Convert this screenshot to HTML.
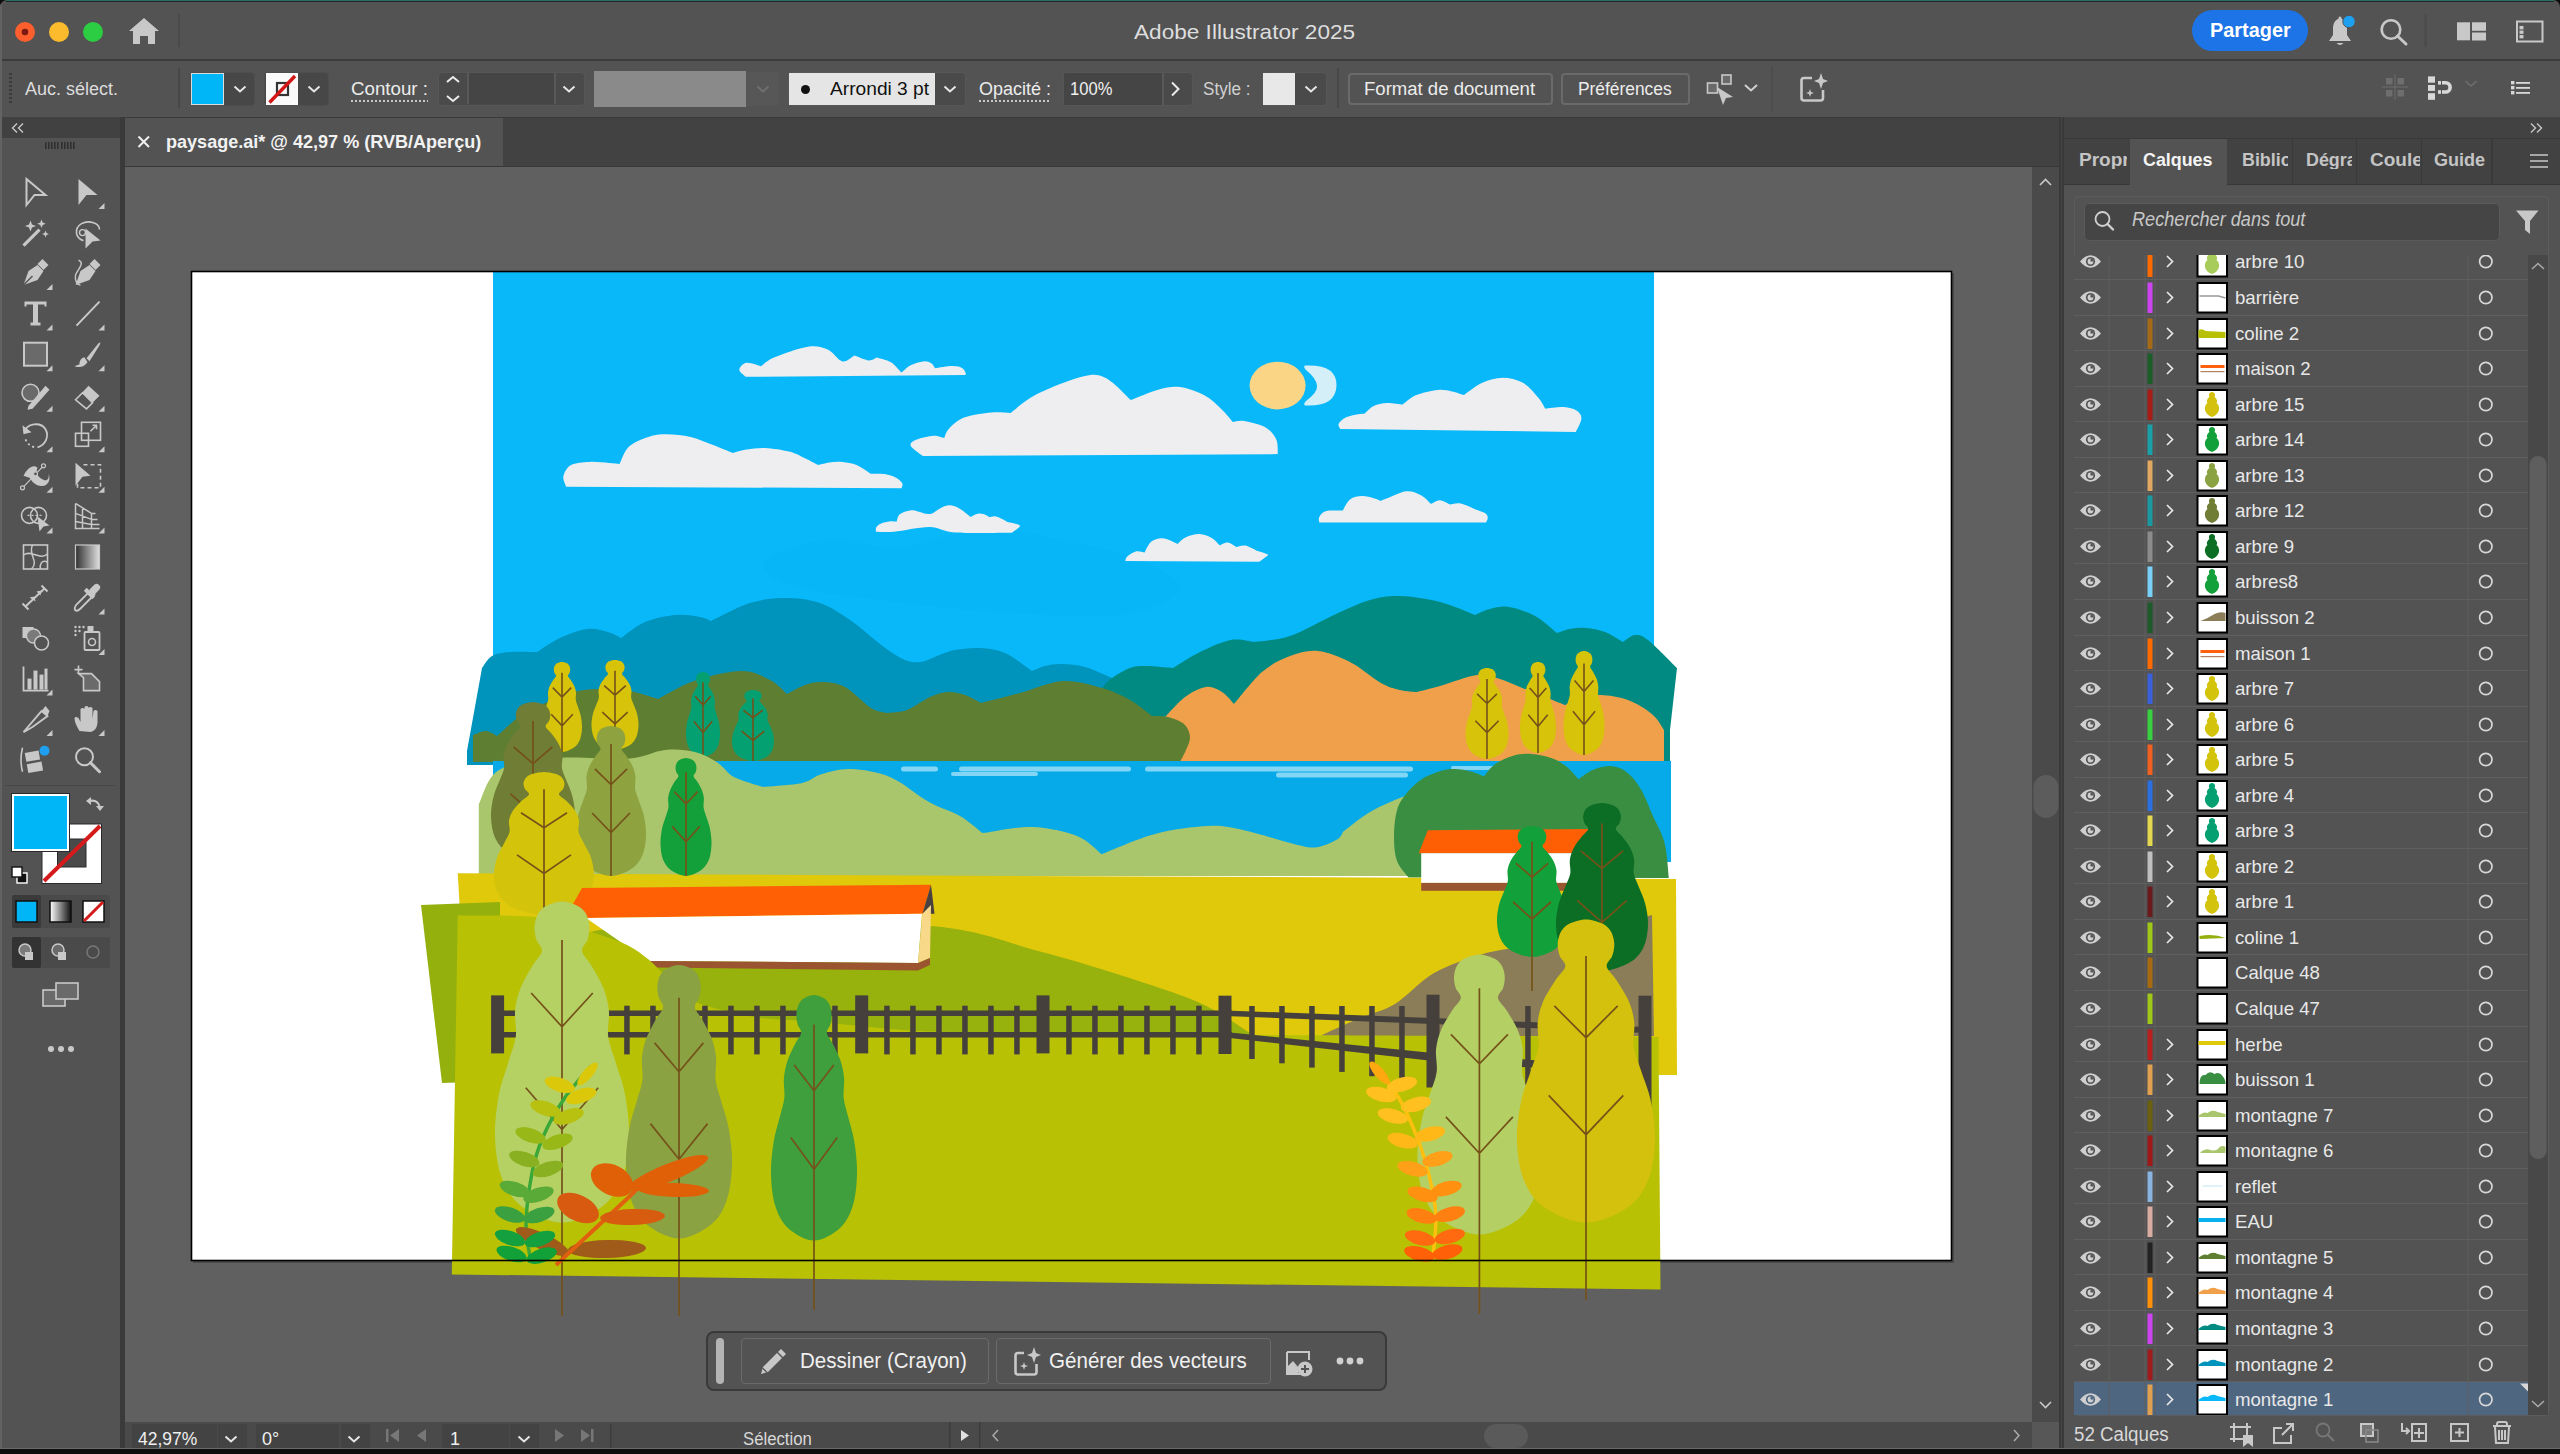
<!DOCTYPE html>
<html><head><meta charset="utf-8">
<style>
*{box-sizing:border-box;margin:0;padding:0}
html,body{width:2560px;height:1454px;overflow:hidden;background:#0c0c0c;font-family:"Liberation Sans",sans-serif;color:#e6e6e6}
.a{position:absolute}
.t{position:absolute;white-space:nowrap;line-height:1}
#win{position:absolute;left:0;top:0;width:2560px;height:1454px;background:#535353;overflow:hidden;border-radius:7px 7px 0 0}
</style></head><body>

<div id="win">

<svg class="a" style="left:0;top:0" width="200" height="60"><circle cx="25" cy="32" r="10" fill="#fe5f2c"/><circle cx="25" cy="32" r="3.3" fill="#7a1a10"/><circle cx="59" cy="32" r="10" fill="#fcbb2d"/><circle cx="93" cy="32" r="10" fill="#2ccc43"/><path d="M144 18 L159 31 L155 31 L155 44 L148 44 L148 36 L140 36 L140 44 L133 44 L133 31 L129 31Z" fill="#c8c8c8"/><rect x="178" y="14" width="2" height="33" fill="#4a4a4a"/></svg><div class="t" style="left:1134px;top:21px;font-size:21px;color:#dedede;font-weight:normal;transform:scaleX(1.076);transform-origin:0 0;">Adobe Illustrator 2025</div><div class="a" style="left:2192px;top:10px;width:116px;height:41px;border-radius:21px;background:#1d74e6"></div><div class="t" style="left:2210px;top:20px;font-size:20.5px;color:#ffffff;font-weight:bold;transform:scaleX(0.97);transform-origin:0 0;">Partager</div><svg class="a" style="left:2320px;top:10px" width="240" height="45"><path d="M20 8.5 C14.5 9.5 13 14 13 19 L13 25 L9 31 L31 31 L27 25 L27 19 C27 14 25.5 9.5 20 8.5Z" fill="#c8c8c8"/><path d="M16.5 33 Q20 37 23.5 33Z" fill="#c8c8c8"/><rect x="18.5" y="6.5" width="3" height="4" rx="1.5" fill="#c8c8c8"/><circle cx="29" cy="11.5" r="6.2" fill="#1ea0f0" stroke="#535353" stroke-width="1"/><circle cx="71" cy="19.5" r="9.3" stroke="#c8c8c8" stroke-width="2.6" fill="none"/><path d="M77.5 26 L86 34" stroke="#c8c8c8" stroke-width="3" stroke-linecap="round"/><rect x="104.5" y="4" width="2" height="33" fill="#4a4a4a"/><rect x="137" y="12.3" width="13" height="18" fill="#c8c8c8"/><rect x="152" y="12.3" width="14" height="8.5" fill="#c8c8c8"/><rect x="152" y="22.5" width="14" height="8" fill="#c8c8c8"/><rect x="197" y="11.5" width="25.5" height="20" fill="none" stroke="#c8c8c8" stroke-width="2"/><rect x="199.5" y="16" width="4" height="3.4" fill="#c8c8c8"/><rect x="199.5" y="20.5" width="4" height="3.4" fill="#c8c8c8"/><rect x="199.5" y="25" width="4" height="3.4" fill="#c8c8c8"/></svg><div class="a" style="left:0px;top:59px;width:2560px;height:2px;background:#3b3b3b;"></div><svg class="a" style="left:8px;top:72px" width="6" height="34"><rect x="1" y="1" width="3" height="2" fill="#3a3a3a"/><rect x="1" y="5" width="3" height="2" fill="#3a3a3a"/><rect x="1" y="9" width="3" height="2" fill="#3a3a3a"/><rect x="1" y="13" width="3" height="2" fill="#3a3a3a"/><rect x="1" y="17" width="3" height="2" fill="#3a3a3a"/><rect x="1" y="21" width="3" height="2" fill="#3a3a3a"/><rect x="1" y="25" width="3" height="2" fill="#3a3a3a"/><rect x="1" y="29" width="3" height="2" fill="#3a3a3a"/></svg><div class="t" style="left:25px;top:80px;font-size:18px;color:#dcdcdc;font-weight:normal;">Auc. sélect.</div><div class="a" style="left:178px;top:68px;width:1.5px;height:40px;background:#474747;"></div><div class="a" style="left:190px;top:71.5px;width:65px;height:34px;border-radius:4px;background:#474747;border:1px solid #4e4e4e"></div><div class="a" style="left:191px;top:73px;width:32.5px;height:32px;background:#00b6f7;border:1.5px solid #dcdcdc"></div><svg class="a" style="left:232.5px;top:84.5px" width="14" height="8" viewBox="0 0 14 8"><path d="M1.5 1.5 L7 6.5 L12.5 1.5" stroke="#e6e6e6" stroke-width="2" fill="none"/></svg><div class="a" style="left:264px;top:71.5px;width:65px;height:34px;border-radius:4px;background:#474747;border:1px solid #4e4e4e"></div><svg class="a" style="left:266px;top:73px" width="32" height="32"><rect width="32" height="32" fill="#fafafa"/><rect x="11" y="10" width="11" height="12" fill="none" stroke="#333" stroke-width="2.2"/><path d="M3.5 29.5 L29 3" stroke="#d21515" stroke-width="3.4"/></svg><svg class="a" style="left:306.5px;top:84.5px" width="14" height="8" viewBox="0 0 14 8"><path d="M1.5 1.5 L7 6.5 L12.5 1.5" stroke="#e6e6e6" stroke-width="2" fill="none"/></svg><div class="t" style="left:350.5px;top:80px;font-size:18px;color:#ececec;font-weight:normal;transform:scaleX(1.04);transform-origin:0 0;">Contour :</div><div class="a" style="left:350.5px;top:100px;width:77px;height:2px;background-image:repeating-linear-gradient(90deg,#c8c8c8 0 2px,transparent 2px 4px)"></div><div class="a" style="left:437.5px;top:71.5px;width:147px;height:34px;border-radius:4px;background:#4a4a4a;border:1px solid #575757"></div><div class="a" style="left:468px;top:73px;width:86px;height:31px;background:#454545;"></div><div class="a" style="left:467px;top:73px;width:1.5px;height:31px;background:#595959;"></div><div class="a" style="left:554px;top:73px;width:1.5px;height:31px;background:#595959;"></div><svg class="a" style="left:445px;top:75px" width="16" height="28"><path d="M2 7 L8 2 L14 7" stroke="#ececec" stroke-width="2" fill="none"/><path d="M2 21 L8 26 L14 21" stroke="#ececec" stroke-width="2" fill="none"/></svg><svg class="a" style="left:561.5px;top:84.5px" width="14" height="8" viewBox="0 0 14 8"><path d="M1.5 1.5 L7 6.5 L12.5 1.5" stroke="#e6e6e6" stroke-width="2" fill="none"/></svg><div class="a" style="left:594px;top:71px;width:151.5px;height:36px;background:#8a8a8a;"></div><div class="a" style="left:746px;top:72px;width:33px;height:34px;border-radius:0 4px 4px 0;background:#575757"></div><svg class="a" style="left:755.5px;top:84.5px" width="14" height="8" viewBox="0 0 14 8"><path d="M1.5 1.5 L7 6.5 L12.5 1.5" stroke="#707070" stroke-width="2" fill="none"/></svg><div class="a" style="left:788px;top:71.5px;width:178px;height:34px;border-radius:4px;background:#4a4a4a;border:1px solid #575757"></div><div class="a" style="left:788.6px;top:72.8px;width:146.4px;height:32.2px;background:#e5e5e5;"></div><div class="a" style="left:801px;top:84.5px;width:9px;height:9px;border-radius:5px;background:#111"></div><div class="t" style="left:829.6px;top:80px;font-size:18px;color:#111;font-weight:normal;transform:scaleX(1.065);transform-origin:0 0;">Arrondi 3 pt</div><svg class="a" style="left:943px;top:84.5px" width="14" height="8" viewBox="0 0 14 8"><path d="M1.5 1.5 L7 6.5 L12.5 1.5" stroke="#e6e6e6" stroke-width="2" fill="none"/></svg><div class="t" style="left:979px;top:80px;font-size:18px;color:#ececec;font-weight:normal;">Opacité :</div><div class="a" style="left:979px;top:100px;width:72px;height:2px;background-image:repeating-linear-gradient(90deg,#c8c8c8 0 2px,transparent 2px 4px)"></div><div class="a" style="left:1062.5px;top:71.5px;width:130px;height:34px;border-radius:4px;background:#4a4a4a;border:1px solid #575757"></div><div class="a" style="left:1063.5px;top:72.5px;width:98.5px;height:32px;background:#454545;"></div><div class="a" style="left:1162px;top:72.5px;width:1.5px;height:32px;background:#595959;"></div><div class="t" style="left:1070px;top:80px;font-size:18px;color:#f0f0f0;font-weight:normal;transform:scaleX(0.92);transform-origin:0 0;">100%</div><svg class="a" style="left:1169px;top:81px" width="14" height="16"><path d="M3 1.5 L9.5 8 L3 14.5" stroke="#ececec" stroke-width="2" fill="none"/></svg><div class="t" style="left:1202.5px;top:80px;font-size:18px;color:#d0d0d0;font-weight:normal;transform:scaleX(0.95);transform-origin:0 0;">Style :</div><div class="a" style="left:1261.5px;top:71.5px;width:65px;height:34px;border-radius:4px;background:#4a4a4a;border:1px solid #575757"></div><div class="a" style="left:1263px;top:73px;width:32px;height:31.6px;background:#e8e8e8;"></div><svg class="a" style="left:1303.5px;top:84.5px" width="14" height="8" viewBox="0 0 14 8"><path d="M1.5 1.5 L7 6.5 L12.5 1.5" stroke="#e6e6e6" stroke-width="2" fill="none"/></svg><div class="a" style="left:1337px;top:68px;width:1.5px;height:40px;background:#474747;"></div><div class="a" style="left:1348px;top:73px;width:204.5px;height:31.6px;border-radius:4px;border:2px solid #6a6a6a"></div><div class="t" style="left:1364.4px;top:80px;font-size:18px;color:#ececec;font-weight:normal;transform:scaleX(1.03);transform-origin:0 0;">Format de document</div><div class="a" style="left:1561px;top:73px;width:128.5px;height:31.6px;border-radius:4px;border:2px solid #6a6a6a"></div><div class="t" style="left:1578px;top:80px;font-size:18px;color:#ececec;font-weight:normal;transform:scaleX(0.965);transform-origin:0 0;">Préférences</div><svg class="a" style="left:1700px;top:70px" width="70" height="36"><rect x="7.5" y="13" width="10" height="10" fill="#6a6a6a" stroke="#c8c8c8" stroke-width="1.6"/><rect x="22" y="5" width="9" height="9" fill="#6a6a6a" stroke="#c8c8c8" stroke-width="1.6"/><path d="M17 17 L33 27 L26 28 L23 35Z" fill="#c8c8c8"/><path d="M45 15 L51 20.5 L57 15" stroke="#d0d0d0" stroke-width="2" fill="none"/></svg><div class="a" style="left:1771px;top:66px;width:1.5px;height:46px;background:#4d4d4d;"></div><svg class="a" style="left:1796px;top:70px" width="36" height="36"><path d="M16 8 L8 8 Q5.5 8 5.5 10.5 L5.5 28 Q5.5 30.5 8 30.5 L24.5 30.5 Q27 30.5 27 28 L27 20" stroke="#c8c8c8" stroke-width="2.6" fill="none"/><path d="M25 3 L27 9 L32 11 L27 13 L25 19 L23 13 L18 11 L23 9Z" fill="#c8c8c8"/><path d="M14 19 L15 22 L18 23 L15 24 L14 27 L13 24 L10 23 L13 22Z" fill="#c8c8c8"/></svg><svg class="a" style="left:2375px;top:70px" width="170" height="36"><g fill="#6e6e6e"><rect x="11" y="8" width="6.5" height="6.5"/><rect x="22.5" y="8" width="6.5" height="6.5"/><rect x="11" y="20" width="6.5" height="6.5"/><rect x="22.5" y="20" width="6.5" height="6.5"/><rect x="7" y="16.5" width="26" height="1"/><rect x="19.5" y="4.5" width="1" height="25"/></g><g fill="#d8d8d8"><rect x="53" y="6.4" width="7" height="6.3"/><rect x="53" y="15" width="7" height="5.9"/><rect x="53" y="23.2" width="7" height="6.6"/></g><path d="M67 12.8 L70.5 12.8 A4.6 4.6 0 0 1 70.5 22 L67 22" stroke="#d8d8d8" stroke-width="3.6" fill="none"/><rect x="63" y="11" width="3" height="3.6" fill="#d8d8d8"/><rect x="63" y="20.2" width="3" height="3.6" fill="#d8d8d8"/><path d="M90.5 11 L96 16 L101.5 11" stroke="#6e6e6e" stroke-width="1.6" fill="none"/><g fill="#d8d8d8"><rect x="136" y="11" width="3.4" height="3.4"/><rect x="136" y="16" width="3.4" height="3.4"/><rect x="136" y="21" width="3.4" height="3.4"/><rect x="141" y="12" width="14" height="1.8"/><rect x="141" y="17" width="14" height="1.8"/><rect x="141" y="22" width="14" height="1.8"/></g></svg><div class="a" style="left:0px;top:4px;width:2px;height:1450px;background:#636363;"></div><div class="a" style="left:2px;top:117px;width:118px;height:21px;background:#414141;"></div><svg class="a" style="left:10px;top:121px" width="16" height="14"><path d="M7 2.5 L2.5 7 L7 11.5 M13 2.5 L8.5 7 L13 11.5" stroke="#c8c8c8" stroke-width="1.4" fill="none"/></svg><svg class="a" style="left:44px;top:142px" width="32" height="8"><rect x="1" y="0" width="1.6" height="7" fill="#303030"/><rect x="4" y="0" width="1.6" height="7" fill="#303030"/><rect x="7" y="0" width="1.6" height="7" fill="#303030"/><rect x="10" y="0" width="1.6" height="7" fill="#303030"/><rect x="13" y="0" width="1.6" height="7" fill="#303030"/><rect x="17" y="0" width="1.6" height="7" fill="#303030"/><rect x="20" y="0" width="1.6" height="7" fill="#303030"/><rect x="23" y="0" width="1.6" height="7" fill="#303030"/><rect x="26" y="0" width="1.6" height="7" fill="#303030"/><rect x="29" y="0" width="1.6" height="7" fill="#303030"/></svg><svg class="a" style="left:0;top:0" width="122" height="1454"><g transform="translate(35.5 192)"><path d="M-9 -13 L10 3 L-1 3 L-9 13Z" fill="none" stroke="#c8c8c8" stroke-width="2"/></g><g transform="translate(87.5 192)"><path d="M-9 -13 L10 3 L-1 3 L-9 13Z" fill="#c8c8c8"/></g><path d="M104.5 209 l0 -6 l-6 6Z" fill="#c8c8c8"/><g transform="translate(35.5 232.6)"><path d="M-12 13 L4 -3" stroke="#c8c8c8" stroke-width="3.2"/><path d="M-5 -12 l1.5 4 4 1.5 -4 1.5 -1.5 4 -1.5 -4 -4 -1.5 4 -1.5Z M6 -13 l1.2 3 3 1.2 -3 1.2 -1.2 3 -1.2 -3 -3 -1.2 3 -1.2Z M10 -2 l1 2.4 2.4 1 -2.4 1 -1 2.4 -1 -2.4 -2.4 -1 2.4 -1Z" fill="#c8c8c8"/></g><g transform="translate(87.5 232.6)"><path d="M-4 8 C-12 6 -14 -4 -6 -9 C2 -13 12 -9 12 -3" stroke="#c8c8c8" stroke-width="1.6" fill="none"/><circle cx="-5" cy="0" r="3" stroke="#c8c8c8" stroke-width="1.4" fill="none"/><path d="M-2 -4 L13 8 L5 9 L-2 16Z" fill="#c8c8c8"/></g><g transform="translate(35.5 273.1)"><path d="M-12 12 L-7 -2 L2 -8 L8 -2 L2 7Z" fill="#c8c8c8"/><path d="M2 -9 L7 -14 L13 -8 L8 -3Z" fill="#c8c8c8"/><path d="M-12 12 L-3 3" stroke="#535353" stroke-width="1.4"/></g><g transform="translate(87.5 273.1)"><path d="M-12 12 L-7 -2 L2 -8 L8 -2 L2 7Z" fill="#c8c8c8"/><path d="M2 -9 L7 -14 L13 -8 L8 -3Z" fill="#c8c8c8"/><path d="M-9 -13 C-2 -10 -10 -4 -12 2 C-13 8 -10 12 -7 12" stroke="#c8c8c8" stroke-width="1.4" fill="none"/></g><path d="M52.5 290.1 l0 -6 l-6 6Z" fill="#c8c8c8"/><g transform="translate(35.5 313.6)"><path d="M-11 -12 L11 -12 L11 -7 L9 -7 L9 -9 L2.5 -9 L2.5 9 L5 9 L5 12 L-5 12 L-5 9 L-2.5 9 L-2.5 -9 L-9 -9 L-9 -7 L-11 -7Z" fill="#c8c8c8"/></g><g transform="translate(87.5 313.6)"><path d="M-11 12 L12 -12" stroke="#c8c8c8" stroke-width="2"/></g><path d="M52.5 330.6 l0 -6 l-6 6Z" fill="#c8c8c8"/><path d="M104.5 330.6 l0 -6 l-6 6Z" fill="#c8c8c8"/><g transform="translate(35.5 354.2)"><rect x="-11.5" y="-11.5" width="23" height="23" fill="#6a6a6a" stroke="#c8c8c8" stroke-width="2"/></g><g transform="translate(87.5 354.2)"><path d="M-1 4 L11 -11 Q14 -13 12 -9 L2 7Z" fill="#c8c8c8"/><path d="M-3 3 Q-8 4 -8 10 L-13 12 Q-5 15 0 8Z" fill="#c8c8c8"/></g><path d="M52.5 371.2 l0 -6 l-6 6Z" fill="#c8c8c8"/><path d="M104.5 371.2 l0 -6 l-6 6Z" fill="#c8c8c8"/><g transform="translate(35.5 394.8)"><circle cx="-5" cy="-2" r="8.5" fill="#6a6a6a" stroke="#c8c8c8" stroke-width="1.6"/><path d="M-7 11 L10 -9 L14 -5 L-3 14 L-8 15Z" fill="#c8c8c8"/></g><g transform="translate(87.5 394.8)"><path d="M-12 5 L1 -9 L12 1 L-1 14Z" fill="#c8c8c8" transform="rotate(0)"/><path d="M-12 5 L-5 -2 L5 8 L-1 14Z" fill="#535353" stroke="#c8c8c8" stroke-width="1.6"/></g><path d="M52.5 411.8 l0 -6 l-6 6Z" fill="#c8c8c8"/><path d="M104.5 411.8 l0 -6 l-6 6Z" fill="#c8c8c8"/><g transform="translate(35.5 435.3)"><path d="M-11 -3 C-9 -12 5 -14 10 -6 C14 1 10 10 2 12" stroke="#c8c8c8" stroke-width="1.8" fill="none"/><path d="M-13 -10 L-12 -1 L-4 -3Z" fill="#c8c8c8"/><path d="M-10 4 Q-7 11 0 12" stroke="#c8c8c8" stroke-width="1.8" stroke-dasharray="2 3" fill="none"/></g><g transform="translate(87.5 435.3)"><rect x="-12" y="-2" width="13" height="13" fill="none" stroke="#c8c8c8" stroke-width="1.6"/><rect x="-6" y="-13" width="19" height="18" fill="none" stroke="#c8c8c8" stroke-width="1.6"/><path d="M3 -4 L9 -10 M5 -10 L9 -10 L9 -6" stroke="#c8c8c8" stroke-width="1.6" fill="none"/></g><path d="M52.5 452.3 l0 -6 l-6 6Z" fill="#c8c8c8"/><path d="M104.5 452.3 l0 -6 l-6 6Z" fill="#c8c8c8"/><g transform="translate(35.5 475.8)"><path d="M-12 0 C-8 -8 -2 -12 2 -8 C0 -4 2 2 8 4 C12 6 14 2 13 -2 C16 4 12 12 4 10 C-2 9 -4 4 -6 2Z" fill="#c8c8c8"/><path d="M-13 12 L8 -10" stroke="#c8c8c8" stroke-width="1.2"/><circle cx="-13" cy="12" r="2" fill="#535353" stroke="#c8c8c8" stroke-width="1.2"/><circle cx="0" cy="-2" r="2" fill="#535353" stroke="#c8c8c8" stroke-width="1.2"/><circle cx="8" cy="-10" r="2" fill="#535353" stroke="#c8c8c8" stroke-width="1.2"/></g><g transform="translate(87.5 475.8)"><path d="M-12 -13 L3 0 L-5 1 L-12 10Z" fill="#c8c8c8"/><path d="M-4 -11 L13 -11 L13 12 L-10 12 L-10 8" stroke="#c8c8c8" stroke-width="1.6" stroke-dasharray="4 3" fill="none"/></g><path d="M52.5 492.8 l0 -6 l-6 6Z" fill="#c8c8c8"/><path d="M104.5 492.8 l0 -6 l-6 6Z" fill="#c8c8c8"/><g transform="translate(35.5 516.4)"><circle cx="-6" cy="-1" r="8" fill="none" stroke="#c8c8c8" stroke-width="1.6"/><circle cx="3" cy="-1" r="8" fill="none" stroke="#c8c8c8" stroke-width="1.6"/><path d="M-8 -1 L6 -1" stroke="#c8c8c8" stroke-width="1.4" stroke-dasharray="2 2"/><path d="M2 0 L14 9 L8 10 L4 15Z" fill="#c8c8c8"/></g><g transform="translate(87.5 516.4)"><path d="M-12 -13 L-12 12 L12 12 M-12 -13 L4 -3 L4 12 M-12 -3 L4 3 M-12 5 L4 8 M-5 -9 L-5 12 M4 -3 L8 -3 M4 3 L10 3 M4 8 L12 8" stroke="#c8c8c8" stroke-width="1.5" fill="none"/></g><path d="M52.5 533.4 l0 -6 l-6 6Z" fill="#c8c8c8"/><path d="M104.5 533.4 l0 -6 l-6 6Z" fill="#c8c8c8"/><g transform="translate(35.5 557)"><rect x="-12" y="-12" width="24" height="24" fill="none" stroke="#c8c8c8" stroke-width="1.6"/><path d="M-12 -2 C-4 -8 4 4 12 -3 M-3 -12 C-8 -2 4 4 -4 12 M12 5 C6 2 4 8 5 12" stroke="#c8c8c8" stroke-width="1.5" fill="none"/></g><g transform="translate(87.5 557)"><defs><linearGradient id="tg" x1="0" x2="1"><stop offset="0" stop-color="#303030"/><stop offset="1" stop-color="#e0e0e0"/></linearGradient></defs><rect x="-12" y="-12" width="24" height="24" fill="url(#tg)" stroke="#c8c8c8" stroke-width="1.2"/></g><g transform="translate(35.5 597.5)"><path d="M-10 9 L9 -9" stroke="#c8c8c8" stroke-width="2"/><path d="M-13 6 L-7 12 M6 -12 L12 -6" stroke="#c8c8c8" stroke-width="2"/><path d="M-6 0 L-1 -1 L0 4Z M1 -6 L6 -7 L5 -2Z" fill="#c8c8c8"/></g><g transform="translate(87.5 597.5)"><path d="M-12 13 Q-14 11 -11 7 L3 -7 L7 -3 L-7 11 Q-10 14 -12 13Z" fill="none" stroke="#c8c8c8" stroke-width="1.8"/><path d="M2 -8 L7 -13 Q10 -15 12 -12 Q14 -10 11 -7 L6 -2Z" fill="#c8c8c8"/><rect x="0" y="-10" width="4" height="12" transform="rotate(-45 2 -4)" fill="#c8c8c8"/></g><path d="M104.5 614.5 l0 -6 l-6 6Z" fill="#c8c8c8"/><g transform="translate(35.5 638)"><rect x="-13" y="-11" width="11" height="11" fill="#c8c8c8"/><circle cx="-2" cy="-2" r="7" fill="#7a7a7a" stroke="#c8c8c8" stroke-width="1.4"/><circle cx="6" cy="5" r="7" fill="#535353" stroke="#c8c8c8" stroke-width="1.6"/></g><g transform="translate(87.5 638)"><rect x="-3" y="-6" width="15" height="18" rx="1" fill="none" stroke="#c8c8c8" stroke-width="1.8"/><circle cx="4.5" cy="4" r="3.5" fill="none" stroke="#c8c8c8" stroke-width="1.6"/><rect x="0" y="-12" width="6" height="5" fill="#c8c8c8"/><g fill="#c8c8c8"><circle cx="-12" cy="-11" r="1.2"/><circle cx="-8" cy="-11" r="1.2"/><circle cx="-4" cy="-11" r="1.2"/><circle cx="-12" cy="-7" r="1.2"/><circle cx="-8" cy="-7" r="1.2"/><circle cx="-12" cy="-3" r="1.2"/></g></g><path d="M104.5 655 l0 -6 l-6 6Z" fill="#c8c8c8"/><g transform="translate(35.5 678.6)"><path d="M-12 -12 L-12 12 L13 12" stroke="#c8c8c8" stroke-width="1.8" fill="none"/><rect x="-8" y="0" width="4" height="11" fill="#c8c8c8"/><rect x="-2" y="-8" width="4" height="19" fill="#c8c8c8"/><rect x="4" y="-4" width="4" height="15" fill="#c8c8c8"/><rect x="9" y="-10" width="3" height="21" fill="#c8c8c8"/></g><g transform="translate(87.5 678.6)"><path d="M-9 -5 L4 -5 L12 3 L12 12 L-4 12 L-4 -1 Z" fill="#6a6a6a" stroke="#c8c8c8" stroke-width="1.6"/><path d="M-13 -9 L-5 -9 M-9 -13 L-9 -5" stroke="#c8c8c8" stroke-width="1.6"/></g><path d="M52.5 695.6 l0 -6 l-6 6Z" fill="#c8c8c8"/><g transform="translate(35.5 719.1)"><path d="M-12 13 L6 -8 L12 -3 L-3 8Z" fill="none" stroke="#c8c8c8" stroke-width="1.8"/><path d="M6 -8 L10 -13 L14 -8 L12 -3Z" fill="#c8c8c8"/></g><g transform="translate(87.5 719.1)"><path d="M-8 12 Q-13 4 -13 -1 Q-12 -3 -9 -1 L-7 3 L-7 -10 Q-5 -12 -3 -10 L-3 -1 L-3 -12 Q-1 -14 1 -12 L1 -1 L1 -11 Q3 -13 5 -11 L5 0 L6 -8 Q8 -10 10 -8 L10 4 Q9 12 3 13Z" fill="#c8c8c8"/></g><path d="M52.5 736.1 l0 -6 l-6 6Z" fill="#c8c8c8"/><path d="M104.5 736.1 l0 -6 l-6 6Z" fill="#c8c8c8"/><g transform="translate(35.5 759.7)"><path d="M-13 -12 Q-16 0 -13 12" stroke="#c8c8c8" stroke-width="1.6" fill="none"/><rect x="-10" y="-8" width="14" height="9" transform="rotate(-10 -3 -3)" fill="#c8c8c8"/><rect x="-8" y="3" width="15" height="9" transform="rotate(-10 0 8)" fill="#c8c8c8"/><circle cx="9" cy="-9" r="5" fill="#1e9ff0"/></g><g transform="translate(87.5 759.7)"><circle cx="-3" cy="-3" r="8.5" fill="none" stroke="#c8c8c8" stroke-width="2"/><path d="M3 3 L12 12" stroke="#c8c8c8" stroke-width="3" stroke-linecap="round"/></g><rect x="5" y="785" width="110" height="1" fill="#484848"/><rect x="42" y="824" width="59.5" height="59.5" fill="#fff" stroke="#2a2a2a" stroke-width="1"/><rect x="57.5" y="839" width="28.5" height="28" fill="#4a4a4a" stroke="#2a2a2a" stroke-width="1"/><path d="M44 881 L100 826" stroke="#d41a1a" stroke-width="4"/><rect x="11.5" y="793.5" width="58" height="58" fill="#fff" stroke="#2a2a2a" stroke-width="1"/><rect x="14" y="796" width="53" height="53" fill="#00b6f7"/><path d="M89 801 Q98 799 100 808" stroke="#c8c8c8" stroke-width="2" fill="none"/><path d="M86 801 L91 797 L91 805Z M96 806 L104 806 L100 811Z" fill="#c8c8c8"/><rect x="17" y="873" width="10" height="10" fill="#111" stroke="#fff" stroke-width="1.4"/><rect x="12" y="867" width="10" height="10" fill="#fff" stroke="#111" stroke-width="1.4"/><rect x="12" y="895" width="98" height="33" rx="2" fill="#4a4a4a"/><rect x="12" y="895" width="29" height="33" rx="2" fill="#3a3a3a"/><rect x="16" y="901" width="21" height="21" fill="#00b6f7" stroke="#111" stroke-width="1.5"/><defs><linearGradient id="g2" x1="0" x2="1"><stop offset="0" stop-color="#fff"/><stop offset="1" stop-color="#111"/></linearGradient></defs><rect x="50" y="901" width="21" height="21" fill="url(#g2)" stroke="#111" stroke-width="1.5"/><rect x="83" y="901" width="21" height="21" fill="#fff" stroke="#111" stroke-width="1.5"/><path d="M84 921 L103 902" stroke="#d41a1a" stroke-width="3"/><rect x="12" y="937" width="98" height="31" rx="2" fill="#4a4a4a"/><rect x="12" y="937" width="29" height="31" rx="2" fill="#333"/><circle cx="25" cy="950" r="6" fill="#7a7a7a" stroke="#c8c8c8" stroke-width="1.5"/><rect x="25" y="952" width="8" height="8" fill="#c8c8c8"/><circle cx="58" cy="950" r="6" fill="#6a6a6a" stroke="#c8c8c8" stroke-width="1.5"/><rect x="58" y="952" width="8" height="8" fill="#c8c8c8"/><circle cx="93" cy="952" r="6" fill="none" stroke="#777" stroke-width="1.5"/><rect x="43" y="990" width="22" height="16" fill="#6a6a6a" stroke="#c8c8c8" stroke-width="1.6"/><rect x="56" y="983" width="22" height="16" fill="#6a6a6a" stroke="#c8c8c8" stroke-width="1.6"/><g fill="#c8c8c8"><circle cx="51" cy="1049" r="3"/><circle cx="61" cy="1049" r="3"/><circle cx="71" cy="1049" r="3"/></g></svg><div class="a" style="left:120px;top:117px;width:5px;height:1332px;background:#3a3a3a;"></div><div class="a" style="left:125px;top:117px;width:1934px;height:50px;background:#424242;"></div><div class="a" style="left:125px;top:117px;width:1934px;height:1px;background:#3a3a3a;"></div><div class="a" style="left:125px;top:166px;width:1934px;height:1px;background:#383838;"></div><div class="a" style="left:125px;top:118px;width:378px;height:48px;background:#535353;"></div><svg class="a" style="left:136px;top:134px" width="16" height="16"><path d="M2.5 2.5 L13 13 M13 2.5 L2.5 13" stroke="#f0f0f0" stroke-width="2"/></svg><div class="t" style="left:166px;top:132px;font-size:19px;color:#f2f2f2;font-weight:bold;transform:scaleX(0.95);transform-origin:0 0;">paysage.ai* @ 42,97 % (RVB/Aperçu)</div><div class="a" style="left:125px;top:167px;width:1907px;height:1255px;background:#606060;"></div><svg class="a" style="left:125px;top:167px" width="1907" height="1255" viewBox="125 167 1907 1255"><rect x="193" y="273" width="1761" height="990" fill="#4a4a4a"/><rect x="191" y="271" width="1761" height="990" fill="#fff"/><rect x="493" y="271" width="1161" height="560" fill="#08b8f9"/><path d="M765 560 C771.7 552.5 807.5 542 830 540 C852.5 538 875 550 900 548 C925 546 953.3 529.3 980 528 C1006.7 526.7 1033.3 534.7 1060 540 C1086.7 545.3 1120 551.7 1140 560 C1160 568.3 1183.3 580.8 1180 590 C1176.7 599.2 1150 611.3 1120 615 C1090 618.7 1040 614.5 1000 612 C960 609.5 915 604.5 880 600 C845 595.5 809.2 591.7 790 585 C770.8 578.3 758.3 567.5 765 560Z" fill="#07b6f7"/><path d="M745.6 376.8 C744.5 375.6 739.1 372 739.3 369.7 C739.5 367.4 742.9 363.4 746.6 362.8 C750.3 362.2 758.8 365.7 761.2 366.2 C763.4 364.8 766.2 360.8 774 357.5 C781.8 354.2 799 348 808 346.7 C817 345.4 822 347.2 827.7 349.6 C833.4 352.1 837.8 360.4 842.3 361.4 C846.8 362.4 852.5 356.5 854.5 355.5 C856.9 356.3 865 360.1 868.7 360.4 C872.4 360.7 875.2 358 876.5 357.5 C878.9 358.3 886.9 359.8 891 362.3 C895.1 364.8 899.7 370.9 901.4 372.6 C903 371.4 907 367.2 910.7 365.3 C914.4 363.4 920 361.7 923.4 361.4 C926.8 361.1 929.3 362.2 931.2 363.3 C933.1 364.4 934.4 367.4 935 368.2 C938 367.8 948.1 366 952.7 366 C957.3 366 960.2 366.9 962.4 368.2 C964.6 369.5 965.4 372.5 965.8 373.6 C966.2 374.7 965.1 374.8 965 375 L745.6 376.8Z" fill="#eeeef0"/><path d="M566.2 486.8 C565.7 485 562.6 479.9 563.4 476.2 C564.2 472.6 566.7 467.4 571 465 C575.3 462.6 583.1 462.2 589.4 461.9 C595.7 461.5 604 462.6 609 462.9 C614 463.2 617.8 463.7 619.6 463.9 C621.1 461 624 451.2 628.8 446.7 C633.5 442.2 642.1 439 648.4 436.9 C654.7 434.8 659.7 434.3 666.7 434.3 C673.7 434.3 683.1 435.2 690.6 436.9 C698.1 438.6 704.7 441.9 711.7 444.6 C718.7 447.3 729.3 451.6 732.8 453 C735.1 452.4 741.5 450.3 746.9 449.5 C752.3 448.7 758.2 447.8 765.2 448.1 C772.2 448.5 782.7 450.1 789 451.6 C795.3 453.1 798.2 455.1 803 457.3 C807.8 459.5 815.4 463.7 817.9 465 C820.1 464.5 827.1 462.7 831.2 462.2 C835.4 461.7 838.3 461.4 842.5 461.9 C846.7 462.4 851.9 463 856.6 465 C861.3 467 868.3 472.2 870.6 473.7 C873 473.8 880.5 473.4 884.7 474.1 C888.9 474.8 893.1 476.2 896 477.7 C898.9 479.2 901.4 481.6 902.3 483.3 C903.2 485.1 901.7 487.4 901.6 488.2 L566.2 486.8Z" fill="#eeeef0"/><path d="M922.9 456.1 C920.9 454.4 911.7 448.4 910.7 445.7 C909.7 442.9 913 441.2 916.8 439.6 C920.6 438 928.9 436.1 933.5 435.8 C938.1 435.6 942.4 437.7 944.2 438.1 C945 436.6 945.5 432.4 948.8 429 C952 425.6 956.9 420.4 964 417.6 C971.1 414.9 983.6 413.3 991.4 412.5 C999.1 411.7 1007.3 412.9 1010.5 413 C1014.9 409.8 1025 400.1 1037 394 C1049 387.9 1071.3 379.1 1082.8 376.4 C1094.2 373.7 1097.7 374.1 1105.7 378 C1113.7 381.9 1126.6 396.3 1130.8 400 C1135.5 398.2 1150.8 391.6 1159 389.4 C1167.2 387.2 1172.7 386 1180.3 387 C1187.9 388 1197.8 391.8 1204.7 395.5 C1211.6 399.2 1216.8 404.8 1221.5 409.2 C1226.2 413.6 1231 420 1232.9 422.1 C1234.8 421.9 1238.8 420.1 1244.3 421 C1249.8 421.9 1260.3 424.4 1265.6 427.5 C1270.9 430.6 1274.3 435.2 1276.3 439.6 C1278.3 444 1277.5 451.7 1277.8 454.1 L922.9 456.1Z" fill="#eeeef0"/><path d="M876 531.7 C876 531 875.4 528.6 876.3 527.2 C877.1 525.8 878.9 524.4 881.1 523.4 C883.3 522.4 886.9 521.7 889.5 521.4 C892.1 521.1 895.4 521.7 896.6 521.7 C897.1 520.5 897.5 516.2 899.8 514.3 C902 512.4 907.1 511 910.1 510.5 C913.1 510 915.2 510.9 917.9 511.4 C920.6 511.9 923.9 513.4 926.2 513.7 C928.6 514 929.9 514.2 932 513.4 C934.1 512.6 936.3 510.2 939.1 508.9 C941.9 507.5 945.6 505.5 948.8 505.3 C952 505.1 954.9 506 958.5 507.9 C962.1 509.8 968.7 515.4 970.7 516.9 C971.9 516.4 975.5 514.1 977.8 513.7 C980 513.3 982.3 513.7 984.2 514.3 C986.1 514.9 988.5 516.7 989.4 517.2 C990.4 517.1 993.2 516 995.2 516.3 C997.2 516.6 999.7 517.9 1001.6 518.8 C1003.5 519.7 1005.9 521.2 1006.8 521.7 C1008.4 522.1 1014.4 523.2 1016.5 524 C1018.6 524.8 1020.5 525.1 1019.7 526.6 C1019 528.1 1013.3 531.7 1012 532.7 C1002.5 532.7 969 533.4 955.2 532.4 C941.5 531.4 939.7 527 929.5 526.9 C919.3 526.8 902.9 530.9 894 531.7 C885.1 532.5 879 531.7 876 531.7Z" fill="#eeeef0"/><path d="M1125.3 561.1 C1125.6 560.4 1125.5 558.2 1127.2 556.6 C1128.9 555 1132.7 552.1 1135.6 551.4 C1138.5 550.7 1143.1 552.2 1144.6 552.4 C1145.7 550.6 1148.3 544.2 1151.1 541.8 C1153.9 539.4 1158.2 538.4 1161.4 538.2 C1164.6 538 1167.7 539.5 1170.4 540.5 C1173.1 541.5 1176.3 543.4 1177.5 544 C1178.9 542.9 1182.2 538.9 1185.9 537.2 C1189.6 535.5 1195.1 533.9 1199.4 534 C1203.7 534.1 1208.3 536 1211.7 537.9 C1215.1 539.8 1218.4 544.1 1219.7 545.3 C1221 544.8 1225 542.1 1227.8 542.4 C1230.5 542.7 1234.8 546.1 1236.2 546.9 C1237.7 546.7 1241.8 545 1245.2 545.6 C1248.6 546.2 1254.9 549.9 1256.8 550.8 C1258.2 551.2 1263.4 552.6 1265.2 553.4 C1267 554.1 1268.7 553.9 1267.8 555.3 C1266.8 556.7 1260.8 560.6 1259.4 561.7 L1125.3 561.1Z" fill="#eeeef0"/><path d="M1340.2 429 C1339.9 428.1 1337.8 425.8 1338.6 423.9 C1339.4 422 1342.4 419.3 1345.2 417.8 C1348 416.3 1352.2 415.5 1355.4 414.8 C1358.6 414.1 1363 413.9 1364.5 413.8 C1366 412.5 1370 407.9 1373.7 406.1 C1377.4 404.3 1382.1 403.4 1386.9 403.1 C1391.7 402.9 1400 404.4 1402.6 404.6 C1404.9 403 1410.4 397.4 1416.3 395 C1422.2 392.6 1431.8 390.5 1437.7 389.9 C1443.6 389.3 1447.5 390.5 1451.9 391.4 C1456.3 392.2 1462 394.4 1464 395 C1467 393 1475.8 385.7 1482.3 382.8 C1488.8 379.9 1495.9 377.7 1502.7 377.7 C1509.5 377.7 1517.1 379.5 1523 382.8 C1528.9 386.1 1534.5 393.2 1538.2 397.5 C1541.9 401.8 1544.1 406.8 1545.3 408.7 C1548.3 408.4 1558.3 406.8 1563.6 407.1 C1568.8 407.4 1573.8 408.8 1576.8 410.7 C1579.8 412.6 1581.6 415.2 1581.4 418.8 C1581.2 422.4 1576.7 429.8 1575.8 432 L1340.2 429Z" fill="#eeeef0"/><path d="M1319.3 522.5 C1319.3 521.6 1318.1 518.8 1319.3 516.9 C1320.5 515 1322.4 512 1326.3 511 C1330.2 509.9 1340 510.7 1342.7 510.6 C1343.9 508.7 1346.8 501.8 1350 499.4 C1353.2 497 1358.2 496.3 1362 496.1 C1365.8 495.9 1370 497.2 1373.1 498 C1376.2 498.8 1379.3 500.4 1380.5 500.9 C1381.8 500.4 1383.7 499.6 1388 498 C1392.3 496.4 1400.9 491.7 1406.5 491.3 C1412.1 490.9 1417.3 493.3 1421.4 495.4 C1425.5 497.5 1429.4 502.5 1431 503.9 C1432.5 503.3 1436.7 500.1 1439.9 500.2 C1443.1 500.3 1448.6 503.9 1450.3 504.6 C1452 504.4 1456.4 502.6 1460.7 503.5 C1465 504.4 1473.7 508.8 1476.3 509.8 C1477.8 510.4 1483.3 511.9 1485.2 513.2 C1487.1 514.5 1487.7 516.1 1487.8 517.6 C1487.9 519.1 1486.3 521.7 1486 522.5 L1319.3 522.5Z" fill="#eeeef0"/><ellipse cx="1277.6" cy="385.6" rx="28" ry="23.8" fill="#fad586"/><path d="M1305 365.5 Q1337 364 1336.5 385.5 Q1336 407 1305 405.5 Q1303 404 1306 401 Q1318 392 1317 385.5 Q1316 378 1306 370 Q1303 367 1305 365.5Z" fill="#d4eff7"/><path d="M467 751 L482 668 C483.7 666 487.3 658.7 492 656 C496.7 653.3 502.5 652.7 510 652 C517.5 651.3 532.5 652 537 652 C540.8 649.7 551.7 641.8 560 638 C568.3 634.2 579 630 587 629 C595 628 602.3 630.5 608 632 C613.7 633.5 618.8 637 621 638 C625 635.3 635.8 625.8 645 622 C654.2 618.2 666.8 615.8 676 615 C685.2 614.2 694.2 616 700 617 C705.8 618 709.2 620.3 711 621 C717.5 618 737.7 606.8 750 603 C762.3 599.2 773.3 598 785 598 C796.7 598 809.2 599.3 820 603 C830.8 606.7 839.3 612.7 850 620 C860.7 627.3 874.8 640.3 884 647 C893.2 653.7 898.8 657.5 905 660 C911.2 662.5 915.7 662.7 921 662 C926.3 661.3 934.3 657 937 656 C940 655 947.8 651.3 955 650 C962.2 648.7 971.7 647.5 980 648 C988.3 648.5 996.3 649.2 1005 653 C1013.7 656.8 1027.5 668 1032 671 C1034.2 670.2 1040 667.2 1045 666 C1050 664.8 1055.3 663.8 1062 664 C1068.7 664.2 1076.7 664.7 1085 667 C1093.3 669.3 1107.5 676.2 1112 678 L1150 700 L1150 765 L467 765Z" fill="#0093bc"/><path d="M1102 688 C1103.7 686.3 1107.3 681.3 1112 678 C1116.7 674.7 1124.3 670 1130 668 C1135.7 666 1138.8 666 1146 666 C1153.2 666 1168.5 667.7 1173 668 C1177.5 665.3 1190.3 656.7 1200 652 C1209.7 647.3 1222 641.7 1231 640 C1240 638.3 1250.2 641.7 1254 642 C1260 641 1276.3 640.7 1290 636 C1303.7 631.3 1322.7 620 1336 614 C1349.3 608 1359.3 603 1370 600 C1380.7 597 1388.3 595.7 1400 596 C1411.7 596.3 1427.5 598.8 1440 602 C1452.5 605.2 1469.2 612.8 1475 615 C1477.5 614 1484.3 610.3 1490 609 C1495.7 607.7 1501.5 605.8 1509 607 C1516.5 608.2 1527 611.7 1535 616 C1543 620.3 1553.3 630.2 1557 633 C1559.2 632.3 1565.2 629.8 1570 629 C1574.8 628.2 1580.2 627.5 1586 628 C1591.8 628.5 1598.8 629.7 1605 632 C1611.2 634.3 1620 640.3 1623 642 C1625 640.8 1630.8 635.3 1635 635 C1639.2 634.7 1641 634.5 1648 640 C1655 645.5 1672.2 663.3 1677 668 L1670 730 L1670 765 L1102 765Z" fill="#018a82"/><path d="M1150 762 L1165 717 C1168.3 713.7 1178.2 702 1185 697 C1191.8 692 1199.8 687.8 1206 687 C1212.2 686.2 1217.3 689.2 1222 692 C1226.7 694.8 1232 702 1234 704 C1238.7 698.7 1252.7 680 1262 672 C1271.3 664 1280.7 659.5 1290 656 C1299.3 652.5 1308 650 1318 651 C1328 652 1339.5 656.7 1350 662 C1360.5 667.3 1372.7 678.3 1381 683 C1389.3 687.7 1394 688.5 1400 690 C1406 691.5 1414.2 691.7 1417 692 C1420.8 691 1430 688.8 1440 686 C1450 683.2 1467 676.2 1477 675 C1487 673.8 1492.8 677 1500 679 C1507.2 681 1512.5 684 1520 687 C1527.5 690 1537.5 694 1545 697 C1552.5 700 1561.7 703.7 1565 705 C1567.5 703.8 1574 699.7 1580 698 C1586 696.3 1593.5 694.8 1601 695 C1608.5 695.2 1618.2 697 1625 699 C1631.8 701 1637 704 1642 707 C1647 710 1651.3 713.2 1655 717 C1658.7 720.8 1662.5 727.8 1664 730 L1664 762Z" fill="#f0a04a"/><path d="M473 762 L473 735 C475.2 734.3 482 730.8 486 731 C490 731.2 495.2 735.2 497 736 C500.8 732.7 512.7 721.2 520 716 C527.3 710.8 532.7 708.8 541 705 C549.3 701.2 560.3 695.7 570 693 C579.7 690.3 589 689.3 599 689 C609 688.7 620.2 689.3 630 691 C639.8 692.7 653.3 697.7 658 699 C664 696 680.2 685.7 694 681 C707.8 676.3 728.3 671.2 741 671 C753.7 670.8 762.3 676.2 770 680 C777.7 683.8 784.2 691.7 787 694 C790 692.5 799.2 687 805 685 C810.8 683 815.3 681.7 822 682 C828.7 682.3 836.8 682.7 845 687 C853.2 691.3 864 703.7 871 708 C878 712.3 884.3 712.2 887 713 C890.3 712.5 899.8 712.7 907 710 C914.2 707.3 923.2 700 930 697 C936.8 694 942.2 692.3 948 692 C953.8 691.7 959.5 693.2 965 695 C970.5 696.8 978.3 701.7 981 703 C987.5 701.3 1006.3 696.7 1020 693 C1033.7 689.3 1049.3 681.8 1063 681 C1076.7 680.2 1090.8 684.8 1102 688 C1113.2 691.2 1121.7 695.3 1130 700 C1138.3 704.7 1148.3 713.3 1152 716 C1154.7 716.2 1162.7 715.7 1168 717 C1173.3 718.3 1180.3 720.7 1184 724 C1187.7 727.3 1189.7 732.7 1190 737 C1190.3 741.3 1187.7 745.8 1186 750 C1184.3 754.2 1181 760 1180 762Z" fill="#5e7f32"/><path d="M562 662 C563.5 662 565.3 662.6 566.4 663.1 C567.5 663.5 568 664.1 568.6 664.7 C569.2 665.3 569.5 666.1 569.8 667 C570.1 667.8 570.2 668.7 570.2 669.6 C570.2 670.6 570 671.8 569.6 672.8 C569.2 673.8 567.8 674.8 568 676 C568.2 677.2 569.7 678.3 570.8 680 C571.9 681.7 573.5 684.2 574.4 686.3 C575.3 688.4 575.8 690.4 576 692.6 C576.2 694.9 575.5 697.4 575.8 699.8 C576.1 702.2 577.2 704.3 578 707 C578.8 709.7 580.1 712.5 580.8 716 C581.5 719.5 582.1 723.8 582 727.7 C581.9 731.6 581.3 736.1 580 739.4 C578.7 742.7 577 745.4 574 747.5 C571 749.6 566 752 562 752 C558 752 553 749.6 550 747.5 C547 745.4 545.3 742.7 544 739.4 C542.7 736.1 542.1 731.6 542 727.7 C541.9 723.8 542.5 719.5 543.2 716 C543.9 712.5 545.2 709.7 546 707 C546.8 704.3 547.9 702.2 548.2 699.8 C548.5 697.4 547.8 694.9 548 692.6 C548.2 690.4 548.7 688.4 549.6 686.3 C550.5 684.2 552.1 681.7 553.2 680 C554.3 678.3 555.8 677.2 556 676 C556.2 674.8 554.8 673.8 554.4 672.8 C554 671.8 553.8 670.6 553.8 669.6 C553.8 668.7 553.9 667.8 554.2 667 C554.5 666.1 554.8 665.3 555.4 664.7 C556 664.1 556.5 663.5 557.6 663.1 C558.7 662.6 560.5 662 562 662Z" fill="#d6c30a"/><path d="M562 672.8 L562 752 M552.8 687.6 L562 697.1 L571.2 687.6 M551.2 714.2 L562 725.9 L572.8 714.2" stroke="#74521a" stroke-width="1.6" fill="none"/><path d="M615 660 C616.7 660 618.9 660.6 620.2 661.1 C621.5 661.5 622.1 662.1 622.8 662.7 C623.4 663.3 623.9 664.1 624.2 665 C624.5 665.8 624.7 666.7 624.6 667.6 C624.6 668.6 624.4 669.8 623.9 670.8 C623.5 671.8 621.8 672.8 622 674 C622.3 675.2 624.1 676.3 625.3 678 C626.6 679.7 628.6 682.2 629.6 684.3 C630.6 686.4 631.2 688.4 631.5 690.6 C631.7 692.9 630.8 695.4 631.2 697.8 C631.6 700.2 632.8 702.3 633.8 705 C634.8 707.7 636.3 710.5 637.1 714 C637.9 717.5 638.7 721.8 638.5 725.7 C638.3 729.6 637.7 734.1 636.1 737.4 C634.6 740.7 632.6 743.4 629.1 745.5 C625.6 747.6 619.7 750 615 750 C610.3 750 604.4 747.6 600.9 745.5 C597.4 743.4 595.4 740.7 593.9 737.4 C592.3 734.1 591.7 729.6 591.5 725.7 C591.3 721.8 592.1 717.5 592.9 714 C593.7 710.5 595.2 707.7 596.2 705 C597.2 702.3 598.4 700.2 598.8 697.8 C599.2 695.4 598.3 692.9 598.5 690.6 C598.8 688.4 599.4 686.4 600.4 684.3 C601.4 682.2 603.4 679.7 604.7 678 C605.9 676.3 607.7 675.2 608 674 C608.2 672.8 606.5 671.8 606.1 670.8 C605.6 669.8 605.4 668.6 605.4 667.6 C605.3 666.7 605.5 665.8 605.8 665 C606.1 664.1 606.6 663.3 607.2 662.7 C607.9 662.1 608.5 661.5 609.8 661.1 C611.1 660.6 613.3 660 615 660Z" fill="#d6c30a"/><path d="M615 670.8 L615 750 M604.2 685.6 L615 695.1 L625.8 685.6 M602.3 712.2 L615 723.9 L627.7 712.2" stroke="#74521a" stroke-width="1.6" fill="none"/><path d="M703 672 C704.2 672 705.8 672.6 706.7 673 C707.7 673.4 708.1 673.9 708.6 674.5 C709.1 675.2 709.4 675.9 709.6 676.7 C709.9 677.5 710 678.3 710 679.2 C709.9 680.1 709.8 681.2 709.5 682.2 C709.1 683.2 707.9 684 708.1 685.2 C708.3 686.3 709.6 687.4 710.5 689 C711.4 690.6 712.8 693 713.5 695 C714.3 696.9 714.7 698.8 714.9 700.9 C715.1 703 714.4 705.4 714.7 707.7 C715 710 715.9 712 716.6 714.5 C717.3 717 718.4 719.7 719 723 C719.5 726.3 720.1 730.4 720 734 C719.9 737.7 719.4 742 718.3 745.1 C717.2 748.2 715.8 750.8 713.2 752.8 C710.7 754.7 706.4 757 703 757 C699.6 757 695.3 754.7 692.8 752.8 C690.2 750.8 688.8 748.2 687.7 745.1 C686.6 742 686.1 737.7 686 734 C685.9 730.4 686.5 726.3 687 723 C687.6 719.7 688.7 717 689.4 714.5 C690.1 712 691 710 691.3 707.7 C691.6 705.4 690.9 703 691.1 700.9 C691.3 698.8 691.7 696.9 692.5 695 C693.2 693 694.6 690.6 695.5 689 C696.4 687.4 697.7 686.3 697.9 685.2 C698.1 684 696.9 683.2 696.5 682.2 C696.2 681.2 696.1 680.1 696 679.2 C696 678.3 696.1 677.5 696.4 676.7 C696.6 675.9 696.9 675.2 697.4 674.5 C697.9 673.9 698.3 673.4 699.3 673 C700.2 672.6 701.8 672 703 672Z" fill="#05a072"/><path d="M703 682.2 L703 757 M695.2 696.2 L703 705.1 L710.8 696.2 M693.8 721.3 L703 732.4 L712.2 721.3" stroke="#74521a" stroke-width="1.6" fill="none"/><path d="M753 690 C754.5 690 756.5 690.5 757.6 690.9 C758.8 691.2 759.3 691.6 759.9 692.1 C760.5 692.6 760.9 693.3 761.2 693.9 C761.5 694.6 761.6 695.3 761.6 696 C761.6 696.8 761.4 697.7 761 698.5 C760.6 699.3 759.1 700.1 759.3 701 C759.5 702 761.1 702.8 762.2 704.2 C763.4 705.6 765.1 707.5 766 709.2 C766.9 710.8 767.5 712.4 767.7 714.1 C767.9 715.9 767.1 717.9 767.5 719.8 C767.8 721.7 768.9 723.4 769.8 725.5 C770.7 727.6 772 729.9 772.7 732.6 C773.4 735.3 774.1 738.8 774 741.8 C773.9 744.9 773.3 748.5 771.9 751.1 C770.5 753.7 768.8 755.8 765.6 757.5 C762.5 759.1 757.2 761 753 761 C748.8 761 743.5 759.1 740.4 757.5 C737.2 755.8 735.5 753.7 734.1 751.1 C732.7 748.5 732.1 744.9 732 741.8 C731.9 738.8 732.6 735.3 733.3 732.6 C734 729.9 735.3 727.6 736.2 725.5 C737.1 723.4 738.2 721.7 738.5 719.8 C738.9 717.9 738.1 715.9 738.3 714.1 C738.5 712.4 739.1 710.8 740 709.2 C740.9 707.5 742.6 705.6 743.8 704.2 C744.9 702.8 746.5 702 746.7 701 C746.9 700.1 745.4 699.3 745 698.5 C744.6 697.7 744.4 696.8 744.4 696 C744.4 695.3 744.5 694.6 744.8 693.9 C745.1 693.3 745.5 692.6 746.1 692.1 C746.7 691.6 747.2 691.2 748.4 690.9 C749.5 690.5 751.5 690 753 690Z" fill="#05a072"/><path d="M753 698.5 L753 761 M743.3 710.2 L753 717.7 L762.7 710.2 M741.7 731.2 L753 740.4 L764.3 731.2" stroke="#74521a" stroke-width="1.6" fill="none"/><path d="M1487 668 C1488.6 668 1490.5 668.6 1491.7 669.1 C1492.9 669.5 1493.5 670.1 1494.1 670.7 C1494.7 671.4 1495.1 672.2 1495.4 673 C1495.7 673.8 1495.9 674.7 1495.8 675.7 C1495.8 676.7 1495.6 677.9 1495.2 678.9 C1494.8 680 1493.2 680.9 1493.5 682.1 C1493.7 683.3 1495.3 684.5 1496.5 686.2 C1497.6 687.9 1499.4 690.4 1500.3 692.6 C1501.3 694.7 1501.8 696.7 1502 698.9 C1502.3 701.2 1501.5 703.8 1501.8 706.2 C1502.2 708.6 1503.3 710.8 1504.2 713.5 C1505.1 716.2 1506.5 719.1 1507.2 722.6 C1507.9 726.1 1508.6 730.5 1508.5 734.4 C1508.4 738.4 1507.8 742.9 1506.3 746.3 C1504.9 749.6 1503.1 752.3 1499.9 754.5 C1496.7 756.6 1491.3 759 1487 759 C1482.7 759 1477.3 756.6 1474.1 754.5 C1470.9 752.3 1469.1 749.6 1467.7 746.3 C1466.2 742.9 1465.6 738.4 1465.5 734.4 C1465.4 730.5 1466.1 726.1 1466.8 722.6 C1467.5 719.1 1468.9 716.2 1469.8 713.5 C1470.7 710.8 1471.8 708.6 1472.2 706.2 C1472.5 703.8 1471.7 701.2 1472 698.9 C1472.2 696.7 1472.7 694.7 1473.7 692.6 C1474.6 690.4 1476.4 687.9 1477.5 686.2 C1478.7 684.5 1480.3 683.3 1480.5 682.1 C1480.8 680.9 1479.2 680 1478.8 678.9 C1478.4 677.9 1478.2 676.7 1478.2 675.7 C1478.1 674.7 1478.3 673.8 1478.6 673 C1478.9 672.2 1479.3 671.4 1479.9 670.7 C1480.5 670.1 1481.1 669.5 1482.3 669.1 C1483.5 668.6 1485.4 668 1487 668Z" fill="#d6c30a"/><path d="M1487 678.9 L1487 759 M1477.1 693.9 L1487 703.5 L1496.9 693.9 M1475.4 720.8 L1487 732.6 L1498.6 720.8" stroke="#74521a" stroke-width="1.6" fill="none"/><path d="M1538 662 C1539.3 662 1541 662.6 1542 663.1 C1543 663.5 1543.4 664.1 1543.9 664.7 C1544.5 665.4 1544.8 666.2 1545 667 C1545.3 667.8 1545.4 668.7 1545.4 669.7 C1545.4 670.7 1545.2 671.9 1544.8 672.9 C1544.5 674 1543.2 674.9 1543.4 676.1 C1543.6 677.3 1545 678.5 1545.9 680.2 C1546.9 681.9 1548.4 684.4 1549.2 686.6 C1549.9 688.7 1550.4 690.7 1550.6 692.9 C1550.8 695.2 1550.1 697.8 1550.4 700.2 C1550.7 702.6 1551.7 704.8 1552.4 707.5 C1553.2 710.2 1554.3 713.1 1554.9 716.6 C1555.5 720.1 1556.1 724.5 1556 728.4 C1555.9 732.4 1555.4 736.9 1554.2 740.3 C1553 743.6 1551.5 746.3 1548.8 748.5 C1546.1 750.6 1541.6 753 1538 753 C1534.4 753 1529.9 750.6 1527.2 748.5 C1524.5 746.3 1523 743.6 1521.8 740.3 C1520.6 736.9 1520.1 732.4 1520 728.4 C1519.9 724.5 1520.5 720.1 1521.1 716.6 C1521.7 713.1 1522.8 710.2 1523.6 707.5 C1524.3 704.8 1525.3 702.6 1525.6 700.2 C1525.9 697.8 1525.2 695.2 1525.4 692.9 C1525.6 690.7 1526.1 688.7 1526.8 686.6 C1527.6 684.4 1529.1 681.9 1530.1 680.2 C1531 678.5 1532.4 677.3 1532.6 676.1 C1532.8 674.9 1531.5 674 1531.2 672.9 C1530.8 671.9 1530.6 670.7 1530.6 669.7 C1530.6 668.7 1530.7 667.8 1531 667 C1531.2 666.2 1531.5 665.4 1532.1 664.7 C1532.6 664.1 1533 663.5 1534 663.1 C1535 662.6 1536.7 662 1538 662Z" fill="#d6c30a"/><path d="M1538 672.9 L1538 753 M1529.7 687.9 L1538 697.5 L1546.3 687.9 M1528.3 714.8 L1538 726.6 L1547.7 714.8" stroke="#74521a" stroke-width="1.6" fill="none"/><path d="M1584 651 C1585.5 651 1587.4 651.7 1588.5 652.2 C1589.6 652.8 1590.2 653.4 1590.8 654.1 C1591.3 654.9 1591.7 655.8 1592 656.7 C1592.3 657.7 1592.4 658.7 1592.4 659.8 C1592.4 661 1592.2 662.3 1591.8 663.5 C1591.4 664.7 1589.9 665.7 1590.2 667.1 C1590.4 668.5 1591.9 669.8 1593 671.8 C1594.1 673.8 1595.8 676.7 1596.7 679.1 C1597.6 681.5 1598.1 683.8 1598.3 686.4 C1598.6 689 1597.8 691.9 1598.1 694.7 C1598.5 697.5 1599.5 699.9 1600.4 703 C1601.3 706.1 1602.6 709.4 1603.3 713.4 C1604 717.4 1604.6 722.4 1604.5 726.9 C1604.4 731.4 1603.8 736.6 1602.5 740.4 C1601.1 744.3 1599.4 747.4 1596.3 749.8 C1593.2 752.2 1588.1 755 1584 755 C1579.9 755 1574.8 752.2 1571.7 749.8 C1568.6 747.4 1566.9 744.3 1565.5 740.4 C1564.2 736.6 1563.6 731.4 1563.5 726.9 C1563.4 722.4 1564 717.4 1564.7 713.4 C1565.4 709.4 1566.7 706.1 1567.6 703 C1568.5 699.9 1569.5 697.5 1569.9 694.7 C1570.2 691.9 1569.4 689 1569.7 686.4 C1569.9 683.8 1570.4 681.5 1571.3 679.1 C1572.2 676.7 1573.9 673.8 1575 671.8 C1576.1 669.8 1577.6 668.5 1577.8 667.1 C1578.1 665.7 1576.6 664.7 1576.2 663.5 C1575.8 662.3 1575.6 661 1575.6 659.8 C1575.6 658.7 1575.7 657.7 1576 656.7 C1576.3 655.8 1576.7 654.9 1577.2 654.1 C1577.8 653.4 1578.4 652.8 1579.5 652.2 C1580.6 651.7 1582.5 651 1584 651Z" fill="#d6c30a"/><path d="M1584 663.5 L1584 755 M1574.6 680.6 L1584 691.6 L1593.4 680.6 M1572.9 711.3 L1584 724.8 L1595.1 711.3" stroke="#74521a" stroke-width="1.6" fill="none"/><rect x="493" y="761" width="1178" height="101" fill="#06aae8"/><rect x="901" y="766.5" width="37" height="5" rx="2.5" fill="#82d5f4"/><rect x="959" y="766.5" width="172" height="5" rx="2.5" fill="#82d5f4"/><rect x="951" y="772.0" width="87" height="4" rx="2.0" fill="#82d5f4"/><rect x="1145" y="766.5" width="268" height="5" rx="2.5" fill="#82d5f4"/><rect x="1276" y="772.5" width="132" height="5" rx="2.5" fill="#82d5f4"/><rect x="1451" y="766.0" width="69" height="4" rx="2.0" fill="#82d5f4"/><path d="M478.8 876 L478.8 804.5 C481.5 799.2 486.5 780.4 495 773 C503.5 765.6 517.2 762.6 530 760 C542.8 757.4 555.3 757.9 572 757.6 C588.7 757.4 614.5 759.8 630 758.5 C645.5 757.2 654.2 751.1 665 750 C675.8 748.9 686.2 749.8 695 752 C703.8 754.2 711.5 758.8 718 763 C724.5 767.2 726.5 773 734 777 C741.5 781 758.2 785.3 763 787 C769.5 786.3 792.2 785.2 802 783 C811.8 780.8 813.8 776.3 822 774 C830.2 771.7 839.7 768.5 851 769 C862.3 769.5 877 771.5 890 777 C903 782.5 917.3 795.5 929 802 C940.7 808.5 951.1 810.8 960 816 C968.9 821.2 978.8 830.2 982.5 833 C990.8 832 1016.2 826.5 1032 827 C1047.8 827.5 1065.4 831.5 1077 836 C1088.6 840.5 1097.5 851.2 1101.6 854.3 C1110.5 850.9 1137.3 838.7 1155 834 C1172.7 829.3 1193.3 826.7 1208 826 C1222.7 825.3 1229 827.1 1243 830 C1257 832.9 1279.9 840.6 1292 843.5 C1304.1 846.4 1308 848 1315.5 847.4 C1323 846.8 1332.4 842.2 1337 839.6 C1341.6 837 1342 833.1 1343 831.8 C1347.5 828.5 1359.7 818 1370 812 C1380.3 806 1393.3 800.5 1405 796 C1416.7 791.5 1427.5 786 1440 785 C1452.5 784 1473.3 789.2 1480 790 L1480 876Z" fill="#a9c66c"/><path d="M1408.5 877.4 C1406.6 874.7 1399.4 867.8 1397 861 C1394.6 854.2 1394 845.4 1394 836.9 C1394 828.4 1394.9 817.5 1397 810.2 C1399.1 802.9 1402.4 798.5 1406.6 793.3 C1410.8 788.1 1416.8 782.5 1422.4 778.8 C1428.1 775 1435.1 772.5 1440.5 770.9 C1445.9 769.3 1450 768.9 1455 769 C1460 769.1 1466 770.3 1470.8 771.5 C1475.6 772.7 1481.8 775.5 1484 776.3 C1485.8 774.3 1490.1 767.6 1495 764.2 C1499.9 760.8 1507.1 757.4 1513.2 755.7 C1519.3 754 1524.9 753.5 1531.4 753.9 C1537.9 754.3 1546.2 756.1 1552 758.2 C1557.8 760.3 1562.1 763.1 1566.5 766.6 C1570.9 770.1 1576.6 777.3 1578.6 779.4 C1580.8 777.9 1586.8 772.5 1592 770.3 C1597.2 768.1 1604.4 765.8 1610 766 C1615.6 766.2 1620.7 767.8 1625.8 771.5 C1630.9 775.2 1636 781.1 1640.4 788.4 C1644.9 795.6 1648.5 805.9 1652.5 815 C1656.5 824.1 1661.9 832.5 1664.6 843 C1667.3 853.5 1668.1 872.2 1668.8 878Z" fill="#3a8e42"/><path d="M457.7 873.3 L1676 879 L1677 1075 L470 1075 Z" fill="#e0c80b"/><path d="M421 905 L500 902 L500 1081 L442 1083Z" fill="#93b00c"/><path d="M533 702 C536.1 702 539.9 703.1 542.2 703.9 C544.5 704.7 545.7 705.6 546.9 706.7 C548 707.9 548.8 709.2 549.4 710.7 C549.9 712.1 550.3 713.7 550.2 715.4 C550.2 717.1 549.7 719.1 549 721 C548.2 722.8 545.2 724.4 545.6 726.5 C546 728.6 549.2 730.6 551.5 733.6 C553.7 736.6 557.2 741 559 744.7 C560.9 748.3 561.9 751.8 562.4 755.7 C562.9 759.7 561.3 764.1 562 768.4 C562.7 772.6 564.9 776.3 566.6 781 C568.4 785.7 571.1 790.7 572.5 796.8 C573.9 802.9 575.3 810.5 575 817.3 C574.7 824.2 573.6 832.1 570.8 837.9 C568 843.7 564.5 848.4 558.2 852.1 C551.9 855.8 541.4 860 533 860 C524.6 860 514.1 855.8 507.8 852.1 C501.5 848.4 498 843.7 495.2 837.9 C492.4 832.1 491.3 824.2 491 817.3 C490.7 810.5 492.1 802.9 493.5 796.8 C494.9 790.7 497.6 785.7 499.4 781 C501.1 776.3 503.3 772.6 504 768.4 C504.7 764.1 503.1 759.7 503.6 755.7 C504.1 751.8 505.1 748.3 507 744.7 C508.8 741 512.3 736.6 514.5 733.6 C516.8 730.6 520 728.6 520.4 726.5 C520.8 724.4 517.8 722.8 517 721 C516.3 719.1 515.8 717.1 515.8 715.4 C515.7 713.7 516.1 712.1 516.6 710.7 C517.2 709.2 518 707.9 519.1 706.7 C520.3 705.6 521.5 704.7 523.8 703.9 C526.1 703.1 529.9 702 533 702Z" fill="#6f7d35"/><path d="M533 721 L533 860 M513.7 747 L533 763.6 L552.3 747 M510.3 793.6 L533 814.2 L555.7 793.6" stroke="#74521a" stroke-width="1.7" fill="none"/><path d="M611 726 C613.6 726 616.8 727 618.7 727.8 C620.6 728.5 621.6 729.4 622.5 730.5 C623.5 731.6 624.2 732.9 624.6 734.2 C625.1 735.6 625.4 737.1 625.4 738.8 C625.3 740.4 624.9 742.2 624.3 744 C623.7 745.8 621.1 747.2 621.5 749.2 C621.9 751.2 624.5 753.1 626.4 756 C628.3 758.9 631.2 763 632.7 766.5 C634.2 770 635.1 773.2 635.5 777 C635.9 780.8 634.6 785 635.1 789 C635.7 793 637.5 796.5 639 801 C640.5 805.5 642.7 810.2 643.9 816 C645.1 821.8 646.2 829 646 835.5 C645.8 842 644.8 849.5 642.5 855 C640.2 860.5 637.2 865 632 868.5 C626.8 872 618 876 611 876 C604 876 595.2 872 590 868.5 C584.8 865 581.8 860.5 579.5 855 C577.2 849.5 576.2 842 576 835.5 C575.8 829 576.9 821.8 578.1 816 C579.3 810.2 581.5 805.5 583 801 C584.5 796.5 586.3 793 586.9 789 C587.4 785 586.1 780.8 586.5 777 C586.9 773.2 587.8 770 589.3 766.5 C590.8 763 593.7 758.9 595.6 756 C597.5 753.1 600.1 751.2 600.5 749.2 C600.9 747.2 598.3 745.8 597.7 744 C597.1 742.2 596.7 740.4 596.6 738.8 C596.6 737.1 596.9 735.6 597.4 734.2 C597.8 732.9 598.5 731.6 599.5 730.5 C600.4 729.4 601.4 728.5 603.3 727.8 C605.2 727 608.4 726 611 726Z" fill="#8fa240"/><path d="M611 744 L611 876 M594.9 768.8 L611 784.5 L627.1 768.8 M592.1 813 L611 832.5 L629.9 813" stroke="#74521a" stroke-width="1.7" fill="none"/><path d="M686 758 C687.9 758 690.2 758.8 691.6 759.4 C693 760 693.7 760.7 694.4 761.5 C695.1 762.4 695.6 763.4 695.9 764.5 C696.3 765.6 696.5 766.8 696.5 768 C696.4 769.3 696.2 770.8 695.7 772.2 C695.2 773.5 693.4 774.7 693.6 776.3 C693.9 777.9 695.9 779.3 697.2 781.6 C698.6 783.9 700.7 787.1 701.8 789.9 C702.9 792.6 703.6 795.2 703.9 798.1 C704.1 801.1 703.2 804.4 703.6 807.6 C704 810.7 705.3 813.5 706.4 817 C707.5 820.5 709.1 824.3 710 828.8 C710.8 833.3 711.7 839 711.5 844.1 C711.3 849.3 710.7 855.2 709 859.5 C707.2 863.8 705.1 867.3 701.3 870.1 C697.5 872.9 691.1 876 686 876 C680.9 876 674.5 872.9 670.7 870.1 C666.9 867.3 664.8 863.8 663 859.5 C661.3 855.2 660.7 849.3 660.5 844.1 C660.3 839 661.2 833.3 662 828.8 C662.9 824.3 664.5 820.5 665.6 817 C666.7 813.5 668 810.7 668.4 807.6 C668.8 804.4 667.9 801.1 668.1 798.1 C668.4 795.2 669.1 792.6 670.2 789.9 C671.3 787.1 673.4 783.9 674.8 781.6 C676.1 779.3 678.1 777.9 678.4 776.3 C678.6 774.7 676.8 773.5 676.3 772.2 C675.8 770.8 675.6 769.3 675.5 768 C675.5 766.8 675.7 765.6 676.1 764.5 C676.4 763.4 676.9 762.4 677.6 761.5 C678.3 760.7 679 760 680.4 759.4 C681.8 758.8 684.1 758 686 758Z" fill="#13a03a"/><path d="M686 772.2 L686 876 M674.3 791.6 L686 804 L697.7 791.6 M672.2 826.4 L686 841.8 L699.8 826.4" stroke="#74521a" stroke-width="1.7" fill="none"/><path d="M544 772 C547.7 772 552.2 773 555 773.7 C557.8 774.4 559.1 775.3 560.5 776.3 C561.9 777.3 562.8 778.6 563.5 779.9 C564.2 781.2 564.6 782.6 564.5 784.2 C564.4 785.7 563.9 787.5 563 789.2 C562.1 790.8 558.5 792.3 559 794.2 C559.5 796.1 563.3 797.9 566 800.6 C568.7 803.3 572.8 807.3 575 810.6 C577.2 813.9 578.4 817 579 820.6 C579.6 824.2 577.7 828.2 578.5 832.1 C579.3 835.9 581.9 839.2 584 843.5 C586.1 847.8 589.3 852.3 591 857.8 C592.7 863.3 594.3 870.2 594 876.4 C593.7 882.6 592.3 889.7 589 895 C585.7 900.2 581.5 904.5 574 907.9 C566.5 911.2 554 915 544 915 C534 915 521.5 911.2 514 907.9 C506.5 904.5 502.3 900.2 499 895 C495.7 889.7 494.3 882.6 494 876.4 C493.7 870.2 495.3 863.3 497 857.8 C498.7 852.3 501.9 847.8 504 843.5 C506.1 839.2 508.7 835.9 509.5 832.1 C510.3 828.2 508.4 824.2 509 820.6 C509.6 817 510.8 813.9 513 810.6 C515.2 807.3 519.3 803.3 522 800.6 C524.7 797.9 528.5 796.1 529 794.2 C529.5 792.3 525.9 790.8 525 789.2 C524.1 787.5 523.6 785.7 523.5 784.2 C523.4 782.6 523.8 781.2 524.5 779.9 C525.2 778.6 526.1 777.3 527.5 776.3 C528.9 775.3 530.2 774.4 533 773.7 C535.8 773 540.3 772 544 772Z" fill="#d3c30b"/><path d="M544 789.2 L544 915 M521 812.8 L544 827.8 L567 812.8 M517 854.9 L544 873.5 L571 854.9" stroke="#74521a" stroke-width="1.7" fill="none"/><path d="M1322 1035 C1327.7 1032.5 1349 1022.6 1360 1018 C1371 1013.4 1383.9 1010.8 1395 1004 C1406.1 997.2 1420.8 980.5 1434 973 C1447.2 965.5 1468.6 958.2 1483 954 C1497.4 949.8 1512.5 948.6 1530 945 C1547.5 941.4 1581.7 934.5 1600 930 C1618.3 925.5 1644.2 917.2 1652 915 L1654 1036 L1322 1036Z" fill="#8a7d58"/><path d="M1418.75 853.2 L1427.8 830.2 L1590 829 L1590 853.2Z" fill="#ff5f04"/><rect x="1421.2" y="853.2" width="169" height="29.7" fill="#fff"/><rect x="1421.2" y="882.9" width="169" height="7.9" fill="#9a5630"/><path d="M1532 826 C1534.6 826 1537.8 826.9 1539.7 827.6 C1541.6 828.2 1542.6 829 1543.5 829.9 C1544.5 830.9 1545.2 832 1545.7 833.2 C1546.1 834.4 1546.4 835.7 1546.3 837.1 C1546.3 838.6 1545.9 840.2 1545.3 841.7 C1544.7 843.2 1542.2 844.6 1542.5 846.3 C1542.8 848.1 1545.5 849.7 1547.4 852.2 C1549.3 854.7 1552.2 858.3 1553.7 861.4 C1555.2 864.4 1556.1 867.3 1556.5 870.5 C1556.9 873.8 1555.6 877.5 1556.2 881 C1556.7 884.5 1558.5 887.6 1560 891.5 C1561.5 895.4 1563.7 899.6 1564.9 904.6 C1566.1 909.6 1567.2 916 1567 921.6 C1566.8 927.3 1565.8 933.9 1563.5 938.7 C1561.2 943.5 1558.2 947.4 1553 950.5 C1547.8 953.5 1539 957 1532 957 C1525 957 1516.2 953.5 1511 950.5 C1505.8 947.4 1502.8 943.5 1500.5 938.7 C1498.2 933.9 1497.2 927.3 1497 921.6 C1496.8 916 1497.9 909.6 1499.1 904.6 C1500.3 899.6 1502.5 895.4 1504 891.5 C1505.5 887.6 1507.3 884.5 1507.8 881 C1508.4 877.5 1507.1 873.8 1507.5 870.5 C1507.9 867.3 1508.8 864.4 1510.3 861.4 C1511.8 858.3 1514.7 854.7 1516.6 852.2 C1518.5 849.7 1521.2 848.1 1521.5 846.3 C1521.8 844.6 1519.3 843.2 1518.7 841.7 C1518.1 840.2 1517.7 838.6 1517.7 837.1 C1517.6 835.7 1517.9 834.4 1518.3 833.2 C1518.8 832 1519.5 830.9 1520.5 829.9 C1521.4 829 1522.4 828.2 1524.3 827.6 C1526.2 826.9 1529.4 826 1532 826Z" fill="#12a03a"/><path d="M1532 841.7 L1532 991 M1515.9 863.3 L1532 877.1 L1548.1 863.3 M1513.1 902 L1532 919 L1550.9 902" stroke="#74521a" stroke-width="1.7" fill="none"/><path d="M1602 803 C1605.4 803 1609.6 804.2 1612.1 805 C1614.6 805.9 1615.9 806.8 1617.2 808 C1618.5 809.2 1619.3 810.7 1619.9 812.2 C1620.6 813.8 1620.9 815.5 1620.9 817.3 C1620.8 819.1 1620.3 821.2 1619.5 823.2 C1618.6 825.1 1615.3 826.8 1615.8 829 C1616.3 831.3 1619.8 833.4 1622.2 836.6 C1624.7 839.8 1628.5 844.4 1630.5 848.4 C1632.5 852.3 1633.7 855.9 1634.2 860.1 C1634.7 864.3 1633 869.1 1633.7 873.6 C1634.5 878 1636.9 882 1638.8 887 C1640.7 892 1643.7 897.4 1645.2 903.8 C1646.8 910.2 1648.3 918.4 1648 925.6 C1647.7 932.9 1646.5 941.3 1643.4 947.5 C1640.3 953.6 1636.5 958.7 1629.6 962.6 C1622.7 966.5 1611.2 971 1602 971 C1592.8 971 1581.3 966.5 1574.4 962.6 C1567.5 958.7 1563.7 953.6 1560.6 947.5 C1557.5 941.3 1556.3 932.9 1556 925.6 C1555.7 918.4 1557.2 910.2 1558.8 903.8 C1560.3 897.4 1563.3 892 1565.2 887 C1567.1 882 1569.5 878 1570.3 873.6 C1571 869.1 1569.3 864.3 1569.8 860.1 C1570.3 855.9 1571.5 852.3 1573.5 848.4 C1575.5 844.4 1579.3 839.8 1581.8 836.6 C1584.2 833.4 1587.7 831.3 1588.2 829 C1588.7 826.8 1585.4 825.1 1584.5 823.2 C1583.7 821.2 1583.2 819.1 1583.1 817.3 C1583.1 815.5 1583.4 813.8 1584.1 812.2 C1584.7 810.7 1585.5 809.2 1586.8 808 C1588.1 806.8 1589.4 805.9 1591.9 805 C1594.4 804.2 1598.6 803 1602 803Z" fill="#0b6e24"/><path d="M1602 823.2 L1602 971 M1580.8 850.9 L1602 868.5 L1623.2 850.9 M1577.2 900.4 L1602 922.3 L1626.8 900.4" stroke="#74521a" stroke-width="1.7" fill="none"/><path d="M560 945 C566 942.8 579 932.9 600 930 C621 927.1 650.5 926.6 700 926 C749.5 925.4 879.3 922.2 930 926 C980.7 929.8 1009.5 943.6 1038 951 C1066.5 958.4 1095.7 967.2 1120 975 C1144.3 982.8 1180.5 994.3 1200 1003 C1219.5 1011.7 1242.5 1028.5 1250 1033 L1250 1060 L560 1060Z" fill="#97b10d"/><path d="M573 904 L582 888 L931 884.7 L922.4 913.7 L586 918Z" fill="#ff5f05"/><path d="M931 884.7 L934.5 913.7 L922.4 913.7Z" fill="#4a4040"/><path d="M586 918 L922 913.7 L918 963 L648 961Z" fill="#fff"/><path d="M922.4 913.7 L931 905 L930 958 L918 963Z" fill="#f8d889"/><path d="M648 961 L918 963 L930 958 L930 965 L918 970.6 L655 967.4Z" fill="#9a5530"/><path d="M457.7 915.4 C468.1 915.6 518.3 914.9 535.7 917 C553.1 919.1 576.1 927.4 588 931 C599.9 934.6 617 940.3 625 944 C633 947.7 642 954.2 648 959 C654 963.8 663.6 974.3 670 980 C676.4 985.7 684.8 997.1 696 1002 C707.2 1006.9 737.7 1014.3 754 1017 C770.3 1019.7 798 1020.3 818 1022 C838 1023.7 885.1 1028.7 904 1030 C922.9 1031.3 913.9 1031.3 960 1032 C1006.1 1032.7 1156.9 1034.4 1250 1035 C1343.1 1035.6 1604 1036.5 1658.5 1036.7 L1660.5 1289.5 L451.8 1274.4Z" fill="#b9c104"/><g fill="#45403b"><rect x="497" y="1010.5" width="735" height="5.5"/><rect x="497" y="1032" width="735" height="5.5"/><path d="M1225 1010.5 L1433 1018 L1433 1024 L1225 1016Z"/><path d="M1225 1032 L1433 1053 L1433 1061 L1225 1037.5Z"/><path d="M1433 1018 L1645 1027 L1645 1033 L1433 1024Z"/><path d="M1433 1053 L1645 1068 L1645 1075 L1433 1061Z"/><rect x="520.2" y="1005.7" width="5.5" height="48.7"/><rect x="546.2" y="1005.7" width="5.5" height="48.7"/><rect x="572.2" y="1005.7" width="5.5" height="48.7"/><rect x="598.2" y="1005.7" width="5.5" height="48.7"/><rect x="624.2" y="1005.7" width="5.5" height="48.7"/><rect x="650.2" y="1005.7" width="5.5" height="48.7"/><rect x="676.2" y="1005.7" width="5.5" height="48.7"/><rect x="702.2" y="1005.7" width="5.5" height="48.7"/><rect x="728.2" y="1005.7" width="5.5" height="48.7"/><rect x="754.2" y="1005.7" width="5.5" height="48.7"/><rect x="780.2" y="1005.7" width="5.5" height="48.7"/><rect x="806.2" y="1005.7" width="5.5" height="48.7"/><rect x="832.2" y="1005.7" width="5.5" height="48.7"/><rect x="884.2" y="1005.7" width="5.5" height="48.7"/><rect x="910.2" y="1005.7" width="5.5" height="48.7"/><rect x="936.2" y="1005.7" width="5.5" height="48.7"/><rect x="962.2" y="1005.7" width="5.5" height="48.7"/><rect x="988.2" y="1005.7" width="5.5" height="48.7"/><rect x="1014.2" y="1005.7" width="5.5" height="48.7"/><rect x="1066.2" y="1005.7" width="5.5" height="48.7"/><rect x="1092.2" y="1005.7" width="5.5" height="48.7"/><rect x="1118.2" y="1005.7" width="5.5" height="48.7"/><rect x="1144.2" y="1005.7" width="5.5" height="48.7"/><rect x="1170.2" y="1005.7" width="5.5" height="48.7"/><rect x="1196.2" y="1005.7" width="5.5" height="48.7"/><rect x="1249.2" y="1006" width="5.5" height="53"/><rect x="1279.2" y="1006" width="5.5" height="57.3"/><rect x="1309.2" y="1006" width="5.5" height="61.6"/><rect x="1339.2" y="1006" width="5.5" height="65.9"/><rect x="1369.2" y="1006" width="5.5" height="70.2"/><rect x="1399.2" y="1006" width="5.5" height="74.5"/><rect x="1525.2" y="1006" width="5.5" height="81"/><rect x="491.1" y="995.4" width="13" height="58"/><rect x="855.2" y="995.4" width="13" height="58"/><rect x="1036.5" y="995.4" width="13" height="58"/><rect x="1218.5" y="995.7" width="13" height="58.3"/><rect x="1426.5" y="994.7" width="13" height="92.8"/><rect x="1638.5" y="995.7" width="13" height="114.3"/></g><path d="M562 901.5 C566.9 901.5 573.1 903.7 576.7 905.4 C580.4 907 582.2 908.8 584.1 911.1 C586 913.4 587.2 916.2 588.1 919.2 C589 922.1 589.6 925.3 589.5 928.8 C589.4 932.3 588.7 936.3 587.5 940 C586.2 943.8 581.4 947 582.1 951.3 C582.8 955.6 587.9 959.6 591.5 965.7 C595.1 971.9 600.6 980.7 603.5 988.2 C606.4 995.7 608.1 1002.6 608.9 1010.7 C609.7 1018.7 607.1 1027.8 608.2 1036.4 C609.3 1044.9 612.8 1052.4 615.6 1062 C618.4 1071.7 622.7 1081.9 625 1094.2 C627.2 1106.5 629.4 1122 629 1135.9 C628.6 1149.8 626.8 1165.9 622.3 1177.6 C617.8 1189.4 612.2 1199.1 602.2 1206.5 C592.2 1214 575.4 1222.6 562 1222.6 C548.6 1222.6 531.8 1214 521.8 1206.5 C511.7 1199.1 506.2 1189.4 501.7 1177.6 C497.2 1165.9 495.4 1149.8 495 1135.9 C494.6 1122 496.8 1106.5 499 1094.2 C501.3 1081.9 505.6 1071.7 508.4 1062 C511.2 1052.4 514.7 1044.9 515.8 1036.4 C516.9 1027.8 514.3 1018.7 515.1 1010.7 C515.9 1002.6 517.6 995.7 520.5 988.2 C523.4 980.7 528.9 971.9 532.5 965.7 C536.1 959.6 541.2 955.6 541.9 951.3 C542.6 947 537.8 943.8 536.5 940 C535.3 936.3 534.6 932.3 534.5 928.8 C534.4 925.3 535 922.1 535.9 919.2 C536.8 916.2 538 913.4 539.9 911.1 C541.8 908.8 543.6 907 547.3 905.4 C550.9 903.7 557.1 901.5 562 901.5Z" fill="#b5d063"/><path d="M562 940 L562 1316 M531.2 993 L562 1026.7 L592.8 993 M525.8 1087.7 L562 1129.5 L598.2 1087.7" stroke="#74521a" stroke-width="1.7" fill="none"/><path d="M679 965 C682.9 965 687.7 966.9 690.7 968.3 C693.6 969.6 695 971.2 696.5 973.2 C698 975.2 699 977.5 699.7 980 C700.4 982.5 700.8 985.3 700.7 988.2 C700.6 991.2 700.1 994.6 699.1 997.8 C698.2 1001 694.4 1003.7 694.9 1007.4 C695.4 1011 699.5 1014.5 702.3 1019.7 C705.1 1024.9 709.6 1032.5 711.9 1038.8 C714.2 1045.2 715.5 1051.2 716.1 1058 C716.7 1064.8 714.7 1072.6 715.6 1079.9 C716.5 1087.2 719.2 1093.5 721.4 1101.8 C723.6 1110 727.1 1118.6 728.8 1129.1 C730.6 1139.6 732.4 1152.8 732 1164.7 C731.6 1176.5 730.2 1190.2 726.7 1200.2 C723.2 1210.2 718.8 1218.4 710.8 1224.8 C702.8 1231.2 689.6 1238.5 679 1238.5 C668.4 1238.5 655.2 1231.2 647.2 1224.8 C639.2 1218.4 634.8 1210.2 631.3 1200.2 C627.8 1190.2 626.4 1176.5 626 1164.7 C625.6 1152.8 627.4 1139.6 629.2 1129.1 C630.9 1118.6 634.4 1110 636.6 1101.8 C638.8 1093.5 641.5 1087.2 642.4 1079.9 C643.3 1072.6 641.3 1064.8 641.9 1058 C642.5 1051.2 643.8 1045.2 646.1 1038.8 C648.4 1032.5 652.9 1024.9 655.7 1019.7 C658.5 1014.5 662.6 1011 663.1 1007.4 C663.6 1003.7 659.8 1001 658.9 997.8 C657.9 994.6 657.4 991.2 657.3 988.2 C657.2 985.3 657.6 982.5 658.3 980 C659 977.5 660 975.2 661.5 973.2 C663 971.2 664.4 969.6 667.3 968.3 C670.3 966.9 675.1 965 679 965Z" fill="#8ba242"/><path d="M679 997.8 L679 1316 M654.6 1042.9 L679 1071.7 L703.4 1042.9 M650.4 1123.6 L679 1159.2 L707.6 1123.6" stroke="#74521a" stroke-width="1.7" fill="none"/><path d="M814 995 C817.2 995 821.1 996.7 823.5 997.9 C825.8 999.2 827 1000.6 828.2 1002.4 C829.4 1004.1 830.2 1006.3 830.8 1008.5 C831.3 1010.8 831.7 1013.2 831.6 1015.9 C831.6 1018.5 831.1 1021.6 830.3 1024.5 C829.6 1027.3 826.5 1029.8 826.9 1033.1 C827.3 1036.3 830.6 1039.4 832.9 1044.1 C835.2 1048.8 838.8 1055.6 840.7 1061.3 C842.5 1067 843.6 1072.3 844.1 1078.5 C844.6 1084.6 843 1091.6 843.7 1098.1 C844.4 1104.7 846.6 1110.4 848.4 1117.8 C850.2 1125.1 853 1132.9 854.4 1142.3 C855.9 1151.7 857.3 1163.6 857 1174.2 C856.7 1184.9 855.6 1197.1 852.7 1206.1 C849.8 1215.1 846.2 1222.5 839.8 1228.2 C833.3 1234 822.6 1240.5 814 1240.5 C805.4 1240.5 794.7 1234 788.2 1228.2 C781.8 1222.5 778.2 1215.1 775.3 1206.1 C772.4 1197.1 771.3 1184.9 771 1174.2 C770.7 1163.6 772.1 1151.7 773.6 1142.3 C775 1132.9 777.8 1125.1 779.6 1117.8 C781.4 1110.4 783.6 1104.7 784.3 1098.1 C785 1091.6 783.4 1084.6 783.9 1078.5 C784.4 1072.3 785.5 1067 787.3 1061.3 C789.2 1055.6 792.8 1048.8 795.1 1044.1 C797.4 1039.4 800.7 1036.3 801.1 1033.1 C801.5 1029.8 798.4 1027.3 797.7 1024.5 C796.9 1021.6 796.4 1018.5 796.4 1015.9 C796.3 1013.2 796.7 1010.8 797.2 1008.5 C797.8 1006.3 798.6 1004.1 799.8 1002.4 C801 1000.6 802.2 999.2 804.5 997.9 C806.9 996.7 810.8 995 814 995Z" fill="#3f9f3c"/><path d="M814 1024.5 L814 1310 M794.2 1065 L814 1090.7 L833.8 1065 M790.8 1137.4 L814 1169.3 L837.2 1137.4" stroke="#74521a" stroke-width="1.7" fill="none"/><path d="M1479.4 954.6 C1483.9 954.6 1489.6 956.6 1493 958 C1496.5 959.4 1498.1 961 1499.9 963 C1501.6 965 1502.8 967.4 1503.6 970 C1504.4 972.6 1504.9 975.4 1504.8 978.4 C1504.7 981.4 1504.1 984.9 1503 988.2 C1501.8 991.5 1497.4 994.3 1498 998 C1498.6 1001.7 1503.4 1005.2 1506.7 1010.6 C1510 1015.9 1515.2 1023.6 1517.8 1030.2 C1520.5 1036.7 1522.1 1042.8 1522.8 1049.8 C1523.5 1056.8 1521.1 1064.7 1522.2 1072.2 C1523.2 1079.6 1526.4 1086.2 1529 1094.5 C1531.6 1102.9 1535.6 1111.8 1537.7 1122.5 C1539.7 1133.3 1541.8 1146.8 1541.4 1158.9 C1541 1171.1 1539.3 1185.1 1535.2 1195.3 C1531.1 1205.6 1525.9 1214 1516.6 1220.5 C1507.3 1227 1491.8 1234.5 1479.4 1234.5 C1467 1234.5 1451.5 1227 1442.2 1220.5 C1432.9 1214 1427.7 1205.6 1423.6 1195.3 C1419.5 1185.1 1417.8 1171.1 1417.4 1158.9 C1417 1146.8 1419.1 1133.3 1421.1 1122.5 C1423.2 1111.8 1427.2 1102.9 1429.8 1094.5 C1432.4 1086.2 1435.6 1079.6 1436.6 1072.2 C1437.7 1064.7 1435.3 1056.8 1436 1049.8 C1436.7 1042.8 1438.3 1036.7 1441 1030.2 C1443.6 1023.6 1448.8 1015.9 1452.1 1010.6 C1455.4 1005.2 1460.2 1001.7 1460.8 998 C1461.4 994.3 1457 991.5 1455.8 988.2 C1454.7 984.9 1454.1 981.4 1454 978.4 C1453.9 975.4 1454.4 972.6 1455.2 970 C1456 967.4 1457.2 965 1458.9 963 C1460.7 961 1462.3 959.4 1465.8 958 C1469.2 956.6 1474.9 954.6 1479.4 954.6Z" fill="#b4cf63"/><path d="M1479.4 988.2 L1479.4 1314 M1450.9 1034.4 L1479.4 1063.8 L1507.9 1034.4 M1445.9 1116.9 L1479.4 1153.3 L1512.9 1116.9" stroke="#74521a" stroke-width="1.7" fill="none"/><path d="M1586 919.5 C1591.1 919.5 1597.4 921.6 1601.2 923.1 C1605 924.7 1606.8 926.4 1608.8 928.6 C1610.7 930.8 1612 933.4 1612.9 936.2 C1613.8 938.9 1614.4 942 1614.3 945.3 C1614.2 948.5 1613.5 952.3 1612.2 955.9 C1611 959.4 1606 962.4 1606.7 966.5 C1607.4 970.5 1612.7 974.3 1616.4 980.1 C1620 985.9 1625.8 994.3 1628.8 1001.3 C1631.8 1008.4 1633.5 1015 1634.3 1022.6 C1635.1 1030.1 1632.5 1038.7 1633.6 1046.8 C1634.8 1054.9 1638.3 1062 1641.2 1071 C1644.1 1080.1 1648.6 1089.7 1650.9 1101.4 C1653.2 1113 1655.5 1127.6 1655 1140.8 C1654.5 1153.9 1652.7 1169.1 1648.1 1180.2 C1643.5 1191.3 1637.8 1200.4 1627.4 1207.4 C1617.1 1214.5 1599.8 1222.6 1586 1222.6 C1572.2 1222.6 1554.9 1214.5 1544.6 1207.4 C1534.2 1200.4 1528.5 1191.3 1523.9 1180.2 C1519.3 1169.1 1517.5 1153.9 1517 1140.8 C1516.5 1127.6 1518.8 1113 1521.1 1101.4 C1523.4 1089.7 1527.9 1080.1 1530.8 1071 C1533.7 1062 1537.2 1054.9 1538.4 1046.8 C1539.5 1038.7 1536.9 1030.1 1537.7 1022.6 C1538.5 1015 1540.2 1008.4 1543.2 1001.3 C1546.2 994.3 1552 985.9 1555.6 980.1 C1559.3 974.3 1564.6 970.5 1565.3 966.5 C1566 962.4 1561 959.4 1559.8 955.9 C1558.5 952.3 1557.8 948.5 1557.7 945.3 C1557.6 942 1558.2 938.9 1559.1 936.2 C1560 933.4 1561.3 930.8 1563.2 928.6 C1565.2 926.4 1567 924.7 1570.8 923.1 C1574.6 921.6 1580.9 919.5 1586 919.5Z" fill="#d4c10d"/><path d="M1586 955.9 L1586 1300 M1554.3 1005.9 L1586 1037.7 L1617.7 1005.9 M1548.7 1095.3 L1586 1134.7 L1623.3 1095.3" stroke="#74521a" stroke-width="1.7" fill="none"/><path d="M530.6 1260 C529.8 1254 525.8 1238.5 526 1224 C526.2 1209.5 529.2 1187.5 532 1173 C534.8 1158.5 537.7 1149.3 543 1137 C548.3 1124.7 556 1110.8 564 1099 C572 1087.2 586.5 1071.5 591 1066" stroke="#3aa838" stroke-width="3.5" fill="none"/><ellipse cx="542.5" cy="1241.5" rx="29.3" ry="8" transform="rotate(25.3 542.5 1241.5)" fill="#a05a1a"/><ellipse cx="607" cy="1249" rx="39" ry="9" transform="rotate(-1.5 607 1249)" fill="#a05a1a"/><path d="M556 1265 L629 1197 L646 1180" stroke="#e06010" stroke-width="4" fill="none"/><ellipse cx="578" cy="1208" rx="22.4" ry="13" transform="rotate(26.6 578 1208)" fill="#d85a10"/><ellipse cx="632.5" cy="1217" rx="32.5" ry="8" transform="rotate(-1.8 632.5 1217)" fill="#d85c10"/><ellipse cx="612" cy="1180" rx="22.4" ry="15" transform="rotate(26.6 612 1180)" fill="#e06008"/><ellipse cx="668" cy="1173" rx="43.1" ry="9" transform="rotate(-21.8 668 1173)" fill="#e06008"/><ellipse cx="673.5" cy="1190" rx="35.5" ry="7" transform="rotate(1.6 673.5 1190)" fill="#e06008"/><ellipse cx="511.6" cy="1254" rx="15.8" ry="7" transform="rotate(18.4 511.6 1254)" fill="#12a038"/><ellipse cx="541.7" cy="1255.6" rx="15.8" ry="7" transform="rotate(-18.4 541.7 1255.6)" fill="#12a038"/><ellipse cx="510" cy="1238" rx="15.8" ry="7" transform="rotate(18.4 510 1238)" fill="#15a040"/><ellipse cx="540" cy="1239" rx="15.8" ry="7" transform="rotate(-18.4 540 1239)" fill="#15a040"/><ellipse cx="510" cy="1214.5" rx="15.8" ry="7" transform="rotate(18.4 510 1214.5)" fill="#3aa040"/><ellipse cx="539.3" cy="1215" rx="15.8" ry="7" transform="rotate(-18.4 539.3 1215)" fill="#3aa040"/><ellipse cx="514.8" cy="1189" rx="15.8" ry="7" transform="rotate(18.4 514.8 1189)" fill="#5aaa38"/><ellipse cx="538.5" cy="1194.7" rx="15.8" ry="7" transform="rotate(-18.4 538.5 1194.7)" fill="#5aaa38"/><ellipse cx="524.3" cy="1159" rx="15.8" ry="7" transform="rotate(18.4 524.3 1159)" fill="#88b020"/><ellipse cx="548" cy="1169" rx="15.8" ry="7" transform="rotate(-18.4 548 1169)" fill="#88b020"/><ellipse cx="530.6" cy="1135.4" rx="15.8" ry="7" transform="rotate(18.4 530.6 1135.4)" fill="#98b818"/><ellipse cx="557.5" cy="1141.7" rx="15.8" ry="7" transform="rotate(-18.4 557.5 1141.7)" fill="#98b818"/><ellipse cx="545.6" cy="1108.5" rx="15.8" ry="7" transform="rotate(18.4 545.6 1108.5)" fill="#b8c010"/><ellipse cx="568.6" cy="1116.4" rx="15.8" ry="7" transform="rotate(-18.4 568.6 1116.4)" fill="#b8c010"/><ellipse cx="559.9" cy="1084.8" rx="15.8" ry="7" transform="rotate(18.4 559.9 1084.8)" fill="#dcc80a"/><ellipse cx="581.2" cy="1095.9" rx="15.8" ry="7" transform="rotate(-18.4 581.2 1095.9)" fill="#dcc80a"/><ellipse cx="587.5" cy="1074" rx="14.5" ry="5" transform="rotate(-49.2 587.5 1074)" fill="#dcc80a"/><path d="M1432.5 1259.6 C1433 1251.9 1436.9 1229.4 1435.8 1213.4 C1434.7 1197.4 1430.1 1178.9 1426 1163.8 C1421.9 1148.7 1416.2 1134.7 1411 1122.6 C1405.8 1110.5 1400.8 1100.6 1394.5 1091 C1388.2 1081.4 1376.6 1069.2 1373 1064.8" stroke="#ffc010" stroke-width="3.5" fill="none"/><ellipse cx="1419.3" cy="1253.8" rx="15.5" ry="7" transform="rotate(14.9 1419.3 1253.8)" fill="#ff6008"/><ellipse cx="1447.3" cy="1252" rx="15.5" ry="7" transform="rotate(-14.9 1447.3 1252)" fill="#ff6008"/><ellipse cx="1420" cy="1238" rx="15.5" ry="7" transform="rotate(14.9 1420 1238)" fill="#ff6a10"/><ellipse cx="1449.8" cy="1236.5" rx="15.5" ry="7" transform="rotate(-14.9 1449.8 1236.5)" fill="#ff6a10"/><ellipse cx="1421.7" cy="1215.9" rx="15.5" ry="7" transform="rotate(14.9 1421.7 1215.9)" fill="#ff8010"/><ellipse cx="1449.8" cy="1214.2" rx="15.5" ry="7" transform="rotate(-14.9 1449.8 1214.2)" fill="#ff8010"/><ellipse cx="1422.6" cy="1194.4" rx="15.5" ry="7" transform="rotate(14.9 1422.6 1194.4)" fill="#ff9010"/><ellipse cx="1446.5" cy="1188.6" rx="15.5" ry="7" transform="rotate(-14.9 1446.5 1188.6)" fill="#ff9010"/><ellipse cx="1412.7" cy="1168.8" rx="15.5" ry="7" transform="rotate(14.9 1412.7 1168.8)" fill="#ffa018"/><ellipse cx="1437.4" cy="1158.9" rx="15.5" ry="7" transform="rotate(-14.9 1437.4 1158.9)" fill="#ffa018"/><ellipse cx="1402.7" cy="1140.7" rx="15.5" ry="7" transform="rotate(14.9 1402.7 1140.7)" fill="#ffb818"/><ellipse cx="1430" cy="1134" rx="15.5" ry="7" transform="rotate(-14.9 1430 1134)" fill="#ffb818"/><ellipse cx="1392.8" cy="1116" rx="15.5" ry="7" transform="rotate(14.9 1392.8 1116)" fill="#ffc020"/><ellipse cx="1416" cy="1104.4" rx="15.5" ry="7" transform="rotate(-14.9 1416 1104.4)" fill="#ffc020"/><ellipse cx="1381.3" cy="1094.5" rx="15.5" ry="7" transform="rotate(14.9 1381.3 1094.5)" fill="#ffc020"/><ellipse cx="1402" cy="1084.6" rx="15.5" ry="7" transform="rotate(-14.9 1402 1084.6)" fill="#ffc020"/><ellipse cx="1379.5" cy="1073" rx="14.5" ry="5" transform="rotate(49.2 1379.5 1073)" fill="#ffa810"/><rect x="191.5" y="271.5" width="1760" height="989" fill="none" stroke="#000" stroke-width="1.6"/></svg><div class="a" style="left:2032px;top:167px;width:27px;height:1255px;background:#4a4a4a;"></div><svg class="a" style="left:2032px;top:167px" width="27" height="1255"><path d="M8 18 L13.5 12.5 L19 18" stroke="#c8c8c8" stroke-width="1.6" fill="none"/><rect x="1.5" y="608" width="25" height="43" rx="12.5" fill="#5c5c5c"/><path d="M8 1235 L13.5 1240.5 L19 1235" stroke="#c8c8c8" stroke-width="1.6" fill="none"/></svg><div class="a" style="left:2059px;top:117px;width:5px;height:1332px;background:#3a3a3a;"></div><div class="a" style="left:2061px;top:117px;width:1px;height:1332px;background:#454545;"></div><div class="a" style="left:125px;top:1422px;width:1907px;height:27px;background:#4a4a4a;"></div><div class="a" style="left:2032px;top:1422px;width:27px;height:27px;background:#575757;"></div><div class="a" style="left:132px;top:1423.5px;width:84.5px;height:25.5px;background:#434343;"></div><div class="a" style="left:218px;top:1423.5px;width:29px;height:25.5px;background:#434343;"></div><div class="t" style="left:137.5px;top:1430px;font-size:18px;color:#f0f0f0;font-weight:normal;transform:scaleX(0.97);transform-origin:0 0;">42,97%</div><svg class="a" style="left:224px;top:1435px" width="14" height="8" viewBox="0 0 14 8"><path d="M1.5 1.5 L7 6.5 L12.5 1.5" stroke="#e6e6e6" stroke-width="2" fill="none"/></svg><div class="a" style="left:255.8px;top:1423.5px;width:83.7px;height:25.5px;background:#434343;"></div><div class="a" style="left:341px;top:1423.5px;width:29px;height:25.5px;background:#434343;"></div><div class="t" style="left:262px;top:1430px;font-size:18px;color:#f0f0f0;font-weight:normal;">0°</div><svg class="a" style="left:347px;top:1435px" width="14" height="8" viewBox="0 0 14 8"><path d="M1.5 1.5 L7 6.5 L12.5 1.5" stroke="#e6e6e6" stroke-width="2" fill="none"/></svg><div class="a" style="left:442px;top:1423.5px;width:67px;height:25.5px;background:#434343;"></div><div class="a" style="left:510px;top:1423.5px;width:29px;height:25.5px;background:#434343;"></div><div class="t" style="left:450px;top:1430px;font-size:18px;color:#f0f0f0;font-weight:normal;">1</div><svg class="a" style="left:517px;top:1435px" width="14" height="8" viewBox="0 0 14 8"><path d="M1.5 1.5 L7 6.5 L12.5 1.5" stroke="#e6e6e6" stroke-width="2" fill="none"/></svg><svg class="a" style="left:380px;top:1422px" width="240" height="27"><g fill="#777"><rect x="6" y="7" width="2.5" height="13"/><path d="M19 7 L10 13.5 L19 20Z"/><path d="M46 7 L37 13.5 L46 20Z"/><path d="M175 7 L184 13.5 L175 20Z"/><path d="M201 7 L210 13.5 L201 20Z"/><rect x="211" y="7" width="2.5" height="13"/></g><rect x="230" y="2" width="1.5" height="25" fill="#3c3c3c"/></svg><div class="t" style="left:743px;top:1430px;font-size:18px;color:#d8d8d8;font-weight:normal;transform:scaleX(0.93);transform-origin:0 0;">Sélection</div><svg class="a" style="left:945px;top:1422px" width="60" height="27"><rect x="4" y="0" width="1.5" height="27" fill="#3c3c3c"/><path d="M16 8 L24 13.5 L16 19Z" fill="#e0e0e0"/><rect x="34" y="0" width="1.5" height="27" fill="#3c3c3c"/><path d="M53 8 L48 13.5 L53 19" stroke="#aaa" stroke-width="1.5" fill="none"/></svg><div class="a" style="left:1484px;top:1424px;width:44px;height:24px;border-radius:12px;background:#5a5a5a"></div><svg class="a" style="left:2008px;top:1422px" width="20" height="27"><path d="M6 8 L11 13.5 L6 19" stroke="#aaa" stroke-width="1.5" fill="none"/></svg><div class="a" style="left:706px;top:1331px;width:680.5px;height:59.5px;border-radius:8px;background:#535353;border:2px solid #3a3a3a"></div><div class="a" style="left:716px;top:1338px;width:7.5px;height:45.5px;border-radius:4px;background:#b4b4b4"></div><div class="a" style="left:740.5px;top:1338px;width:248px;height:46.3px;border-radius:4px;border:1.5px solid #6a6a6a"></div><svg class="a" style="left:755px;top:1345px" width="36" height="32"><path d="M6 29 L8 22 L22 8 L27 13 L13 27Z" fill="#c8c8c8"/><path d="M23 7 L26 4 L31 9 L28 12Z" fill="#c8c8c8"/><path d="M7.5 23 L12 27.5" stroke="#535353" stroke-width="1.2"/></svg><div class="t" style="left:799.8px;top:1350px;font-size:22px;color:#f0f0f0;font-weight:normal;transform:scaleX(0.935);transform-origin:0 0;">Dessiner (Crayon)</div><div class="a" style="left:996px;top:1338px;width:275px;height:46.3px;border-radius:4px;border:1.5px solid #6a6a6a"></div><svg class="a" style="left:1010px;top:1343px" width="36" height="36"><path d="M14 10 L8 10 Q5.5 10 5.5 12.5 L5.5 29 Q5.5 31.5 8 31.5 L24 31.5 Q26.5 31.5 26.5 29 L26.5 21" stroke="#c8c8c8" stroke-width="2.6" fill="none"/><path d="M24 4 L26 10 L31 12 L26 14 L24 20 L22 14 L17 12 L22 10Z" fill="#c8c8c8"/><path d="M14 19 L15 22 L18 23 L15 24 L14 27 L13 24 L10 23 L13 22Z" fill="#c8c8c8"/></svg><div class="t" style="left:1048.6px;top:1350px;font-size:22px;color:#f0f0f0;font-weight:normal;transform:scaleX(0.935);transform-origin:0 0;">Générer des vecteurs</div><svg class="a" style="left:1284px;top:1348px" width="90" height="30"><path d="M3 4 L25 4 L25 12" stroke="#c8c8c8" stroke-width="2" fill="none"/><path d="M3 4 L3 26 L16 26" stroke="#c8c8c8" stroke-width="2" fill="none"/><path d="M4 25 L4 18 L9 13 L14 19 L14 25Z" fill="#c8c8c8"/><circle cx="21" cy="21" r="7.5" fill="#c8c8c8"/><path d="M21 17 L21 25 M17 21 L25 21" stroke="#535353" stroke-width="2"/><g fill="#d0d0d0"><circle cx="56" cy="13" r="3.4"/><circle cx="66" cy="13" r="3.4"/><circle cx="76" cy="13" r="3.4"/></g></svg><div class="a" style="left:2064px;top:117px;width:496px;height:21px;background:#424242;"></div><svg class="a" style="left:2528px;top:121px" width="20" height="14"><path d="M3 2.5 L7.5 7 L3 11.5 M9 2.5 L13.5 7 L9 11.5" stroke="#c8c8c8" stroke-width="1.4" fill="none"/></svg><div class="a" style="left:2064px;top:138px;width:496px;height:46px;background:#424242;"></div><div class="a" style="left:2064px;top:138px;width:496px;height:1px;background:#383838;"></div><div class="a" style="left:2129.5px;top:138.5px;width:97px;height:46px;background:#535353;"></div><div class="a" style="left:2291.5px;top:139px;width:1.5px;height:45px;background:#3a3a3a;"></div><div class="a" style="left:2355.5px;top:139px;width:1.5px;height:45px;background:#3a3a3a;"></div><div class="a" style="left:2420.5px;top:139px;width:1.5px;height:45px;background:#3a3a3a;"></div><div class="a" style="left:2491px;top:139px;width:1.5px;height:45px;background:#3a3a3a;"></div><div class="a" style="left:2064px;top:184px;width:65.5px;height:1px;background:#383838;"></div><div class="a" style="left:2226.5px;top:184px;width:333px;height:1px;background:#383838;"></div><div class="t" style="left:2079px;top:150px;font-size:19px;font-weight:bold;color:#c4c4c4;width:48px;overflow:hidden">Propri</div><div class="t" style="left:2143px;top:150px;font-size:19px;color:#f4f4f4;font-weight:bold;transform:scaleX(0.94);transform-origin:0 0;">Calques</div><div class="t" style="left:2242px;top:150px;font-size:19px;font-weight:bold;color:#c4c4c4;width:49px;overflow:hidden;transform:scaleX(0.94);transform-origin:0 0">Biblio</div><div class="t" style="left:2306px;top:150px;font-size:19px;font-weight:bold;color:#c4c4c4;width:49px;overflow:hidden;transform:scaleX(0.94);transform-origin:0 0">Dégra</div><div class="t" style="left:2370px;top:150px;font-size:19px;font-weight:bold;color:#c4c4c4;width:50px;overflow:hidden">Coule</div><div class="t" style="left:2434px;top:150px;font-size:19px;color:#c4c4c4;font-weight:bold;transform:scaleX(0.95);transform-origin:0 0;">Guide</div><svg class="a" style="left:2528px;top:152px" width="22" height="18"><path d="M2 3 L20 3 M2 9 L20 9 M2 15 L20 15" stroke="#c8c8c8" stroke-width="1.6"/></svg><div class="a" style="left:2073.5px;top:196px;width:475.5px;height:1220px;border:1px solid #5c5c5c;border-radius:4px"></div><div class="a" style="left:2084px;top:203px;width:416px;height:37.5px;border-radius:5px;background:#454545;border:1px solid #5a5a5a"></div><svg class="a" style="left:2092px;top:208px" width="28" height="28"><circle cx="10.5" cy="11" r="7" stroke="#d0d0d0" stroke-width="1.8" fill="none"/><path d="M15.5 16 L21 21.5" stroke="#d0d0d0" stroke-width="2.4" stroke-linecap="round"/></svg><div class="t" style="left:2131.5px;top:210px;font-size:19.5px;color:#c8c8c8;font-weight:normal;font-style:italic;transform:scaleX(0.93);transform-origin:0 0;">Rechercher dans tout</div><svg class="a" style="left:2514px;top:208px" width="28" height="28"><path d="M2 2.5 L24.5 2.5 L16 13 L16 26 L11 22 L11 13Z" fill="#c8c8c8"/></svg><div class="a" style="left:2073.5px;top:254.5px;width:454px;height:1160.5px;overflow:hidden"><div class="a" style="left:0;top:-10.1px;width:454px;height:35.5px;background:#535353;border-bottom:1px solid #5f5f5f"><svg class="a" style="left:0;top:0" width="454" height="36"><rect x="34.5" y="0" width="1" height="35" fill="#5f5f5f"/><rect x="70.5" y="0" width="1" height="35" fill="#5f5f5f"/><rect x="80.5" y="0" width="1" height="35" fill="#5f5f5f"/><rect x="393.5" y="0" width="1" height="35" fill="#5f5f5f"/><path d="M6 17.5 Q16.5 5 27 17.5 Q16.5 30 6 17.5Z" fill="#cfcfcf"/><circle cx="16.5" cy="17.5" r="4.6" fill="#535353"/><circle cx="16.5" cy="17.5" r="2.9" fill="#cfcfcf"/><path d="M16.5 17.5 L16.5 14.6 A2.9 2.9 0 0 1 19.4 17.5Z" fill="#535353"/><rect x="73.5" y="2.5" width="5" height="30.5" fill="#ff6a00"/><path d="M93 12 L98.5 17.5 L93 23" stroke="#e8e8e8" stroke-width="1.7" fill="none"/><rect x="123.5" y="3" width="29.5" height="29.5" fill="#fff" stroke="#000" stroke-width="2"/><g transform="translate(124.5 4)"><path d="M13.5 1 C17 1 17 5 16 6 C19 8 19 11 18 12 C22 15 22 23 13.5 26 C5 23 5 15 9 12 C8 11 8 8 11 6 C10 5 10 1 13.5 1Z" fill="#a8cc5a"/></g><circle cx="411.8" cy="17.5" r="6.2" stroke="#d8d8d8" stroke-width="1.7" fill="none"/></svg><div class="t" style="left:161.5px;top:8px;font-size:19px;color:#e8e8e8;transform:scaleX(0.98);transform-origin:0 0">arbre 10</div></div><div class="a" style="left:0;top:25.5px;width:454px;height:35.5px;background:#535353;border-bottom:1px solid #5f5f5f"><svg class="a" style="left:0;top:0" width="454" height="36"><rect x="34.5" y="0" width="1" height="35" fill="#5f5f5f"/><rect x="70.5" y="0" width="1" height="35" fill="#5f5f5f"/><rect x="80.5" y="0" width="1" height="35" fill="#5f5f5f"/><rect x="393.5" y="0" width="1" height="35" fill="#5f5f5f"/><path d="M6 17.5 Q16.5 5 27 17.5 Q16.5 30 6 17.5Z" fill="#cfcfcf"/><circle cx="16.5" cy="17.5" r="4.6" fill="#535353"/><circle cx="16.5" cy="17.5" r="2.9" fill="#cfcfcf"/><path d="M16.5 17.5 L16.5 14.6 A2.9 2.9 0 0 1 19.4 17.5Z" fill="#535353"/><rect x="73.5" y="2.5" width="5" height="30.5" fill="#cc44f0"/><path d="M93 12 L98.5 17.5 L93 23" stroke="#e8e8e8" stroke-width="1.7" fill="none"/><rect x="123.5" y="3" width="29.5" height="29.5" fill="#fff" stroke="#000" stroke-width="2"/><g transform="translate(124.5 4)"><path d="M1 12 L20 12 L27 14" stroke="#999" stroke-width="1.5" fill="none"/></g><circle cx="411.8" cy="17.5" r="6.2" stroke="#d8d8d8" stroke-width="1.7" fill="none"/></svg><div class="t" style="left:161.5px;top:8px;font-size:19px;color:#e8e8e8;transform:scaleX(0.98);transform-origin:0 0">barrière</div></div><div class="a" style="left:0;top:61.1px;width:454px;height:35.5px;background:#535353;border-bottom:1px solid #5f5f5f"><svg class="a" style="left:0;top:0" width="454" height="36"><rect x="34.5" y="0" width="1" height="35" fill="#5f5f5f"/><rect x="70.5" y="0" width="1" height="35" fill="#5f5f5f"/><rect x="80.5" y="0" width="1" height="35" fill="#5f5f5f"/><rect x="393.5" y="0" width="1" height="35" fill="#5f5f5f"/><path d="M6 17.5 Q16.5 5 27 17.5 Q16.5 30 6 17.5Z" fill="#cfcfcf"/><circle cx="16.5" cy="17.5" r="4.6" fill="#535353"/><circle cx="16.5" cy="17.5" r="2.9" fill="#cfcfcf"/><path d="M16.5 17.5 L16.5 14.6 A2.9 2.9 0 0 1 19.4 17.5Z" fill="#535353"/><rect x="73.5" y="2.5" width="5" height="30.5" fill="#a56a16"/><path d="M93 12 L98.5 17.5 L93 23" stroke="#e8e8e8" stroke-width="1.7" fill="none"/><rect x="123.5" y="3" width="29.5" height="29.5" fill="#fff" stroke="#000" stroke-width="2"/><g transform="translate(124.5 4)"><path d="M0 10 Q4 8 7 11 L27 12 L27 18 L0 18Z" fill="#b8c004"/></g><circle cx="411.8" cy="17.5" r="6.2" stroke="#d8d8d8" stroke-width="1.7" fill="none"/></svg><div class="t" style="left:161.5px;top:8px;font-size:19px;color:#e8e8e8;transform:scaleX(0.98);transform-origin:0 0">coline 2</div></div><div class="a" style="left:0;top:96.6px;width:454px;height:35.5px;background:#535353;border-bottom:1px solid #5f5f5f"><svg class="a" style="left:0;top:0" width="454" height="36"><rect x="34.5" y="0" width="1" height="35" fill="#5f5f5f"/><rect x="70.5" y="0" width="1" height="35" fill="#5f5f5f"/><rect x="80.5" y="0" width="1" height="35" fill="#5f5f5f"/><rect x="393.5" y="0" width="1" height="35" fill="#5f5f5f"/><path d="M6 17.5 Q16.5 5 27 17.5 Q16.5 30 6 17.5Z" fill="#cfcfcf"/><circle cx="16.5" cy="17.5" r="4.6" fill="#535353"/><circle cx="16.5" cy="17.5" r="2.9" fill="#cfcfcf"/><path d="M16.5 17.5 L16.5 14.6 A2.9 2.9 0 0 1 19.4 17.5Z" fill="#535353"/><rect x="73.5" y="2.5" width="5" height="30.5" fill="#1b5e28"/><path d="M93 12 L98.5 17.5 L93 23" stroke="#e8e8e8" stroke-width="1.7" fill="none"/><rect x="123.5" y="3" width="29.5" height="29.5" fill="#fff" stroke="#000" stroke-width="2"/><g transform="translate(124.5 4)"><rect x="2" y="10" width="24" height="3" fill="#ff6010"/><rect x="2" y="16" width="24" height="1.2" fill="#b08060"/></g><circle cx="411.8" cy="17.5" r="6.2" stroke="#d8d8d8" stroke-width="1.7" fill="none"/></svg><div class="t" style="left:161.5px;top:8px;font-size:19px;color:#e8e8e8;transform:scaleX(0.98);transform-origin:0 0">maison 2</div></div><div class="a" style="left:0;top:132.1px;width:454px;height:35.5px;background:#535353;border-bottom:1px solid #5f5f5f"><svg class="a" style="left:0;top:0" width="454" height="36"><rect x="34.5" y="0" width="1" height="35" fill="#5f5f5f"/><rect x="70.5" y="0" width="1" height="35" fill="#5f5f5f"/><rect x="80.5" y="0" width="1" height="35" fill="#5f5f5f"/><rect x="393.5" y="0" width="1" height="35" fill="#5f5f5f"/><path d="M6 17.5 Q16.5 5 27 17.5 Q16.5 30 6 17.5Z" fill="#cfcfcf"/><circle cx="16.5" cy="17.5" r="4.6" fill="#535353"/><circle cx="16.5" cy="17.5" r="2.9" fill="#cfcfcf"/><path d="M16.5 17.5 L16.5 14.6 A2.9 2.9 0 0 1 19.4 17.5Z" fill="#535353"/><rect x="73.5" y="2.5" width="5" height="30.5" fill="#a81c16"/><path d="M93 12 L98.5 17.5 L93 23" stroke="#e8e8e8" stroke-width="1.7" fill="none"/><rect x="123.5" y="3" width="29.5" height="29.5" fill="#fff" stroke="#000" stroke-width="2"/><g transform="translate(124.5 4)"><path d="M13.5 1 C17 1 17 5 16 6 C19 8 19 11 18 12 C22 15 22 23 13.5 26 C5 23 5 15 9 12 C8 11 8 8 11 6 C10 5 10 1 13.5 1Z" fill="#d4c10d"/></g><circle cx="411.8" cy="17.5" r="6.2" stroke="#d8d8d8" stroke-width="1.7" fill="none"/></svg><div class="t" style="left:161.5px;top:8px;font-size:19px;color:#e8e8e8;transform:scaleX(0.98);transform-origin:0 0">arbre 15</div></div><div class="a" style="left:0;top:167.7px;width:454px;height:35.5px;background:#535353;border-bottom:1px solid #5f5f5f"><svg class="a" style="left:0;top:0" width="454" height="36"><rect x="34.5" y="0" width="1" height="35" fill="#5f5f5f"/><rect x="70.5" y="0" width="1" height="35" fill="#5f5f5f"/><rect x="80.5" y="0" width="1" height="35" fill="#5f5f5f"/><rect x="393.5" y="0" width="1" height="35" fill="#5f5f5f"/><path d="M6 17.5 Q16.5 5 27 17.5 Q16.5 30 6 17.5Z" fill="#cfcfcf"/><circle cx="16.5" cy="17.5" r="4.6" fill="#535353"/><circle cx="16.5" cy="17.5" r="2.9" fill="#cfcfcf"/><path d="M16.5 17.5 L16.5 14.6 A2.9 2.9 0 0 1 19.4 17.5Z" fill="#535353"/><rect x="73.5" y="2.5" width="5" height="30.5" fill="#1aa0a8"/><path d="M93 12 L98.5 17.5 L93 23" stroke="#e8e8e8" stroke-width="1.7" fill="none"/><rect x="123.5" y="3" width="29.5" height="29.5" fill="#fff" stroke="#000" stroke-width="2"/><g transform="translate(124.5 4)"><path d="M13.5 1 C17 1 17 5 16 6 C19 8 19 11 18 12 C22 15 22 23 13.5 26 C5 23 5 15 9 12 C8 11 8 8 11 6 C10 5 10 1 13.5 1Z" fill="#12a03a"/></g><circle cx="411.8" cy="17.5" r="6.2" stroke="#d8d8d8" stroke-width="1.7" fill="none"/></svg><div class="t" style="left:161.5px;top:8px;font-size:19px;color:#e8e8e8;transform:scaleX(0.98);transform-origin:0 0">arbre 14</div></div><div class="a" style="left:0;top:203.2px;width:454px;height:35.5px;background:#535353;border-bottom:1px solid #5f5f5f"><svg class="a" style="left:0;top:0" width="454" height="36"><rect x="34.5" y="0" width="1" height="35" fill="#5f5f5f"/><rect x="70.5" y="0" width="1" height="35" fill="#5f5f5f"/><rect x="80.5" y="0" width="1" height="35" fill="#5f5f5f"/><rect x="393.5" y="0" width="1" height="35" fill="#5f5f5f"/><path d="M6 17.5 Q16.5 5 27 17.5 Q16.5 30 6 17.5Z" fill="#cfcfcf"/><circle cx="16.5" cy="17.5" r="4.6" fill="#535353"/><circle cx="16.5" cy="17.5" r="2.9" fill="#cfcfcf"/><path d="M16.5 17.5 L16.5 14.6 A2.9 2.9 0 0 1 19.4 17.5Z" fill="#535353"/><rect x="73.5" y="2.5" width="5" height="30.5" fill="#e0a860"/><path d="M93 12 L98.5 17.5 L93 23" stroke="#e8e8e8" stroke-width="1.7" fill="none"/><rect x="123.5" y="3" width="29.5" height="29.5" fill="#fff" stroke="#000" stroke-width="2"/><g transform="translate(124.5 4)"><path d="M13.5 1 C17 1 17 5 16 6 C19 8 19 11 18 12 C22 15 22 23 13.5 26 C5 23 5 15 9 12 C8 11 8 8 11 6 C10 5 10 1 13.5 1Z" fill="#8ba242"/></g><circle cx="411.8" cy="17.5" r="6.2" stroke="#d8d8d8" stroke-width="1.7" fill="none"/></svg><div class="t" style="left:161.5px;top:8px;font-size:19px;color:#e8e8e8;transform:scaleX(0.98);transform-origin:0 0">arbre 13</div></div><div class="a" style="left:0;top:238.8px;width:454px;height:35.5px;background:#535353;border-bottom:1px solid #5f5f5f"><svg class="a" style="left:0;top:0" width="454" height="36"><rect x="34.5" y="0" width="1" height="35" fill="#5f5f5f"/><rect x="70.5" y="0" width="1" height="35" fill="#5f5f5f"/><rect x="80.5" y="0" width="1" height="35" fill="#5f5f5f"/><rect x="393.5" y="0" width="1" height="35" fill="#5f5f5f"/><path d="M6 17.5 Q16.5 5 27 17.5 Q16.5 30 6 17.5Z" fill="#cfcfcf"/><circle cx="16.5" cy="17.5" r="4.6" fill="#535353"/><circle cx="16.5" cy="17.5" r="2.9" fill="#cfcfcf"/><path d="M16.5 17.5 L16.5 14.6 A2.9 2.9 0 0 1 19.4 17.5Z" fill="#535353"/><rect x="73.5" y="2.5" width="5" height="30.5" fill="#1a9aa0"/><path d="M93 12 L98.5 17.5 L93 23" stroke="#e8e8e8" stroke-width="1.7" fill="none"/><rect x="123.5" y="3" width="29.5" height="29.5" fill="#fff" stroke="#000" stroke-width="2"/><g transform="translate(124.5 4)"><path d="M13.5 1 C17 1 17 5 16 6 C19 8 19 11 18 12 C22 15 22 23 13.5 26 C5 23 5 15 9 12 C8 11 8 8 11 6 C10 5 10 1 13.5 1Z" fill="#6f7d35"/></g><circle cx="411.8" cy="17.5" r="6.2" stroke="#d8d8d8" stroke-width="1.7" fill="none"/></svg><div class="t" style="left:161.5px;top:8px;font-size:19px;color:#e8e8e8;transform:scaleX(0.98);transform-origin:0 0">arbre 12</div></div><div class="a" style="left:0;top:274.3px;width:454px;height:35.5px;background:#535353;border-bottom:1px solid #5f5f5f"><svg class="a" style="left:0;top:0" width="454" height="36"><rect x="34.5" y="0" width="1" height="35" fill="#5f5f5f"/><rect x="70.5" y="0" width="1" height="35" fill="#5f5f5f"/><rect x="80.5" y="0" width="1" height="35" fill="#5f5f5f"/><rect x="393.5" y="0" width="1" height="35" fill="#5f5f5f"/><path d="M6 17.5 Q16.5 5 27 17.5 Q16.5 30 6 17.5Z" fill="#cfcfcf"/><circle cx="16.5" cy="17.5" r="4.6" fill="#535353"/><circle cx="16.5" cy="17.5" r="2.9" fill="#cfcfcf"/><path d="M16.5 17.5 L16.5 14.6 A2.9 2.9 0 0 1 19.4 17.5Z" fill="#535353"/><rect x="73.5" y="2.5" width="5" height="30.5" fill="#8c8c8c"/><path d="M93 12 L98.5 17.5 L93 23" stroke="#e8e8e8" stroke-width="1.7" fill="none"/><rect x="123.5" y="3" width="29.5" height="29.5" fill="#fff" stroke="#000" stroke-width="2"/><g transform="translate(124.5 4)"><path d="M13.5 1 C17 1 17 5 16 6 C19 8 19 11 18 12 C22 15 22 23 13.5 26 C5 23 5 15 9 12 C8 11 8 8 11 6 C10 5 10 1 13.5 1Z" fill="#0b6e24"/></g><circle cx="411.8" cy="17.5" r="6.2" stroke="#d8d8d8" stroke-width="1.7" fill="none"/></svg><div class="t" style="left:161.5px;top:8px;font-size:19px;color:#e8e8e8;transform:scaleX(0.98);transform-origin:0 0">arbre 9</div></div><div class="a" style="left:0;top:309.9px;width:454px;height:35.5px;background:#535353;border-bottom:1px solid #5f5f5f"><svg class="a" style="left:0;top:0" width="454" height="36"><rect x="34.5" y="0" width="1" height="35" fill="#5f5f5f"/><rect x="70.5" y="0" width="1" height="35" fill="#5f5f5f"/><rect x="80.5" y="0" width="1" height="35" fill="#5f5f5f"/><rect x="393.5" y="0" width="1" height="35" fill="#5f5f5f"/><path d="M6 17.5 Q16.5 5 27 17.5 Q16.5 30 6 17.5Z" fill="#cfcfcf"/><circle cx="16.5" cy="17.5" r="4.6" fill="#535353"/><circle cx="16.5" cy="17.5" r="2.9" fill="#cfcfcf"/><path d="M16.5 17.5 L16.5 14.6 A2.9 2.9 0 0 1 19.4 17.5Z" fill="#535353"/><rect x="73.5" y="2.5" width="5" height="30.5" fill="#78d0f8"/><path d="M93 12 L98.5 17.5 L93 23" stroke="#e8e8e8" stroke-width="1.7" fill="none"/><rect x="123.5" y="3" width="29.5" height="29.5" fill="#fff" stroke="#000" stroke-width="2"/><g transform="translate(124.5 4)"><path d="M13.5 1 C17 1 17 5 16 6 C19 8 19 11 18 12 C22 15 22 23 13.5 26 C5 23 5 15 9 12 C8 11 8 8 11 6 C10 5 10 1 13.5 1Z" fill="#13a03a"/></g><circle cx="411.8" cy="17.5" r="6.2" stroke="#d8d8d8" stroke-width="1.7" fill="none"/></svg><div class="t" style="left:161.5px;top:8px;font-size:19px;color:#e8e8e8;transform:scaleX(0.98);transform-origin:0 0">arbres8</div></div><div class="a" style="left:0;top:345.5px;width:454px;height:35.5px;background:#535353;border-bottom:1px solid #5f5f5f"><svg class="a" style="left:0;top:0" width="454" height="36"><rect x="34.5" y="0" width="1" height="35" fill="#5f5f5f"/><rect x="70.5" y="0" width="1" height="35" fill="#5f5f5f"/><rect x="80.5" y="0" width="1" height="35" fill="#5f5f5f"/><rect x="393.5" y="0" width="1" height="35" fill="#5f5f5f"/><path d="M6 17.5 Q16.5 5 27 17.5 Q16.5 30 6 17.5Z" fill="#cfcfcf"/><circle cx="16.5" cy="17.5" r="4.6" fill="#535353"/><circle cx="16.5" cy="17.5" r="2.9" fill="#cfcfcf"/><path d="M16.5 17.5 L16.5 14.6 A2.9 2.9 0 0 1 19.4 17.5Z" fill="#535353"/><rect x="73.5" y="2.5" width="5" height="30.5" fill="#1e5a2a"/><path d="M93 12 L98.5 17.5 L93 23" stroke="#e8e8e8" stroke-width="1.7" fill="none"/><rect x="123.5" y="3" width="29.5" height="29.5" fill="#fff" stroke="#000" stroke-width="2"/><g transform="translate(124.5 4)"><path d="M2 17 Q10 14 16 10 Q22 7 27 9 L27 17Z" fill="#8a7d58"/></g><circle cx="411.8" cy="17.5" r="6.2" stroke="#d8d8d8" stroke-width="1.7" fill="none"/></svg><div class="t" style="left:161.5px;top:8px;font-size:19px;color:#e8e8e8;transform:scaleX(0.98);transform-origin:0 0">buisson 2</div></div><div class="a" style="left:0;top:381px;width:454px;height:35.5px;background:#535353;border-bottom:1px solid #5f5f5f"><svg class="a" style="left:0;top:0" width="454" height="36"><rect x="34.5" y="0" width="1" height="35" fill="#5f5f5f"/><rect x="70.5" y="0" width="1" height="35" fill="#5f5f5f"/><rect x="80.5" y="0" width="1" height="35" fill="#5f5f5f"/><rect x="393.5" y="0" width="1" height="35" fill="#5f5f5f"/><path d="M6 17.5 Q16.5 5 27 17.5 Q16.5 30 6 17.5Z" fill="#cfcfcf"/><circle cx="16.5" cy="17.5" r="4.6" fill="#535353"/><circle cx="16.5" cy="17.5" r="2.9" fill="#cfcfcf"/><path d="M16.5 17.5 L16.5 14.6 A2.9 2.9 0 0 1 19.4 17.5Z" fill="#535353"/><rect x="73.5" y="2.5" width="5" height="30.5" fill="#ff6a00"/><path d="M93 12 L98.5 17.5 L93 23" stroke="#e8e8e8" stroke-width="1.7" fill="none"/><rect x="123.5" y="3" width="29.5" height="29.5" fill="#fff" stroke="#000" stroke-width="2"/><g transform="translate(124.5 4)"><rect x="2" y="10" width="24" height="3" fill="#ff6010"/><rect x="2" y="16" width="24" height="1.2" fill="#b08060"/></g><circle cx="411.8" cy="17.5" r="6.2" stroke="#d8d8d8" stroke-width="1.7" fill="none"/></svg><div class="t" style="left:161.5px;top:8px;font-size:19px;color:#e8e8e8;transform:scaleX(0.98);transform-origin:0 0">maison 1</div></div><div class="a" style="left:0;top:416.5px;width:454px;height:35.5px;background:#535353;border-bottom:1px solid #5f5f5f"><svg class="a" style="left:0;top:0" width="454" height="36"><rect x="34.5" y="0" width="1" height="35" fill="#5f5f5f"/><rect x="70.5" y="0" width="1" height="35" fill="#5f5f5f"/><rect x="80.5" y="0" width="1" height="35" fill="#5f5f5f"/><rect x="393.5" y="0" width="1" height="35" fill="#5f5f5f"/><path d="M6 17.5 Q16.5 5 27 17.5 Q16.5 30 6 17.5Z" fill="#cfcfcf"/><circle cx="16.5" cy="17.5" r="4.6" fill="#535353"/><circle cx="16.5" cy="17.5" r="2.9" fill="#cfcfcf"/><path d="M16.5 17.5 L16.5 14.6 A2.9 2.9 0 0 1 19.4 17.5Z" fill="#535353"/><rect x="73.5" y="2.5" width="5" height="30.5" fill="#3a60dc"/><path d="M93 12 L98.5 17.5 L93 23" stroke="#e8e8e8" stroke-width="1.7" fill="none"/><rect x="123.5" y="3" width="29.5" height="29.5" fill="#fff" stroke="#000" stroke-width="2"/><g transform="translate(124.5 4)"><path d="M13.5 1 C17 1 17 5 16 6 C19 8 19 11 18 12 C22 15 22 23 13.5 26 C5 23 5 15 9 12 C8 11 8 8 11 6 C10 5 10 1 13.5 1Z" fill="#d3c30b"/></g><circle cx="411.8" cy="17.5" r="6.2" stroke="#d8d8d8" stroke-width="1.7" fill="none"/></svg><div class="t" style="left:161.5px;top:8px;font-size:19px;color:#e8e8e8;transform:scaleX(0.98);transform-origin:0 0">arbre 7</div></div><div class="a" style="left:0;top:452.1px;width:454px;height:35.5px;background:#535353;border-bottom:1px solid #5f5f5f"><svg class="a" style="left:0;top:0" width="454" height="36"><rect x="34.5" y="0" width="1" height="35" fill="#5f5f5f"/><rect x="70.5" y="0" width="1" height="35" fill="#5f5f5f"/><rect x="80.5" y="0" width="1" height="35" fill="#5f5f5f"/><rect x="393.5" y="0" width="1" height="35" fill="#5f5f5f"/><path d="M6 17.5 Q16.5 5 27 17.5 Q16.5 30 6 17.5Z" fill="#cfcfcf"/><circle cx="16.5" cy="17.5" r="4.6" fill="#535353"/><circle cx="16.5" cy="17.5" r="2.9" fill="#cfcfcf"/><path d="M16.5 17.5 L16.5 14.6 A2.9 2.9 0 0 1 19.4 17.5Z" fill="#535353"/><rect x="73.5" y="2.5" width="5" height="30.5" fill="#38d040"/><path d="M93 12 L98.5 17.5 L93 23" stroke="#e8e8e8" stroke-width="1.7" fill="none"/><rect x="123.5" y="3" width="29.5" height="29.5" fill="#fff" stroke="#000" stroke-width="2"/><g transform="translate(124.5 4)"><path d="M13.5 1 C17 1 17 5 16 6 C19 8 19 11 18 12 C22 15 22 23 13.5 26 C5 23 5 15 9 12 C8 11 8 8 11 6 C10 5 10 1 13.5 1Z" fill="#d3c30b"/></g><circle cx="411.8" cy="17.5" r="6.2" stroke="#d8d8d8" stroke-width="1.7" fill="none"/></svg><div class="t" style="left:161.5px;top:8px;font-size:19px;color:#e8e8e8;transform:scaleX(0.98);transform-origin:0 0">arbre 6</div></div><div class="a" style="left:0;top:487.6px;width:454px;height:35.5px;background:#535353;border-bottom:1px solid #5f5f5f"><svg class="a" style="left:0;top:0" width="454" height="36"><rect x="34.5" y="0" width="1" height="35" fill="#5f5f5f"/><rect x="70.5" y="0" width="1" height="35" fill="#5f5f5f"/><rect x="80.5" y="0" width="1" height="35" fill="#5f5f5f"/><rect x="393.5" y="0" width="1" height="35" fill="#5f5f5f"/><path d="M6 17.5 Q16.5 5 27 17.5 Q16.5 30 6 17.5Z" fill="#cfcfcf"/><circle cx="16.5" cy="17.5" r="4.6" fill="#535353"/><circle cx="16.5" cy="17.5" r="2.9" fill="#cfcfcf"/><path d="M16.5 17.5 L16.5 14.6 A2.9 2.9 0 0 1 19.4 17.5Z" fill="#535353"/><rect x="73.5" y="2.5" width="5" height="30.5" fill="#f06020"/><path d="M93 12 L98.5 17.5 L93 23" stroke="#e8e8e8" stroke-width="1.7" fill="none"/><rect x="123.5" y="3" width="29.5" height="29.5" fill="#fff" stroke="#000" stroke-width="2"/><g transform="translate(124.5 4)"><path d="M13.5 1 C17 1 17 5 16 6 C19 8 19 11 18 12 C22 15 22 23 13.5 26 C5 23 5 15 9 12 C8 11 8 8 11 6 C10 5 10 1 13.5 1Z" fill="#d3c30b"/></g><circle cx="411.8" cy="17.5" r="6.2" stroke="#d8d8d8" stroke-width="1.7" fill="none"/></svg><div class="t" style="left:161.5px;top:8px;font-size:19px;color:#e8e8e8;transform:scaleX(0.98);transform-origin:0 0">arbre 5</div></div><div class="a" style="left:0;top:523.2px;width:454px;height:35.5px;background:#535353;border-bottom:1px solid #5f5f5f"><svg class="a" style="left:0;top:0" width="454" height="36"><rect x="34.5" y="0" width="1" height="35" fill="#5f5f5f"/><rect x="70.5" y="0" width="1" height="35" fill="#5f5f5f"/><rect x="80.5" y="0" width="1" height="35" fill="#5f5f5f"/><rect x="393.5" y="0" width="1" height="35" fill="#5f5f5f"/><path d="M6 17.5 Q16.5 5 27 17.5 Q16.5 30 6 17.5Z" fill="#cfcfcf"/><circle cx="16.5" cy="17.5" r="4.6" fill="#535353"/><circle cx="16.5" cy="17.5" r="2.9" fill="#cfcfcf"/><path d="M16.5 17.5 L16.5 14.6 A2.9 2.9 0 0 1 19.4 17.5Z" fill="#535353"/><rect x="73.5" y="2.5" width="5" height="30.5" fill="#2a70e0"/><path d="M93 12 L98.5 17.5 L93 23" stroke="#e8e8e8" stroke-width="1.7" fill="none"/><rect x="123.5" y="3" width="29.5" height="29.5" fill="#fff" stroke="#000" stroke-width="2"/><g transform="translate(124.5 4)"><path d="M13.5 1 C17 1 17 5 16 6 C19 8 19 11 18 12 C22 15 22 23 13.5 26 C5 23 5 15 9 12 C8 11 8 8 11 6 C10 5 10 1 13.5 1Z" fill="#05a072"/></g><circle cx="411.8" cy="17.5" r="6.2" stroke="#d8d8d8" stroke-width="1.7" fill="none"/></svg><div class="t" style="left:161.5px;top:8px;font-size:19px;color:#e8e8e8;transform:scaleX(0.98);transform-origin:0 0">arbre 4</div></div><div class="a" style="left:0;top:558.8px;width:454px;height:35.5px;background:#535353;border-bottom:1px solid #5f5f5f"><svg class="a" style="left:0;top:0" width="454" height="36"><rect x="34.5" y="0" width="1" height="35" fill="#5f5f5f"/><rect x="70.5" y="0" width="1" height="35" fill="#5f5f5f"/><rect x="80.5" y="0" width="1" height="35" fill="#5f5f5f"/><rect x="393.5" y="0" width="1" height="35" fill="#5f5f5f"/><path d="M6 17.5 Q16.5 5 27 17.5 Q16.5 30 6 17.5Z" fill="#cfcfcf"/><circle cx="16.5" cy="17.5" r="4.6" fill="#535353"/><circle cx="16.5" cy="17.5" r="2.9" fill="#cfcfcf"/><path d="M16.5 17.5 L16.5 14.6 A2.9 2.9 0 0 1 19.4 17.5Z" fill="#535353"/><rect x="73.5" y="2.5" width="5" height="30.5" fill="#e4d850"/><path d="M93 12 L98.5 17.5 L93 23" stroke="#e8e8e8" stroke-width="1.7" fill="none"/><rect x="123.5" y="3" width="29.5" height="29.5" fill="#fff" stroke="#000" stroke-width="2"/><g transform="translate(124.5 4)"><path d="M13.5 1 C17 1 17 5 16 6 C19 8 19 11 18 12 C22 15 22 23 13.5 26 C5 23 5 15 9 12 C8 11 8 8 11 6 C10 5 10 1 13.5 1Z" fill="#05a072"/></g><circle cx="411.8" cy="17.5" r="6.2" stroke="#d8d8d8" stroke-width="1.7" fill="none"/></svg><div class="t" style="left:161.5px;top:8px;font-size:19px;color:#e8e8e8;transform:scaleX(0.98);transform-origin:0 0">arbre 3</div></div><div class="a" style="left:0;top:594.3px;width:454px;height:35.5px;background:#535353;border-bottom:1px solid #5f5f5f"><svg class="a" style="left:0;top:0" width="454" height="36"><rect x="34.5" y="0" width="1" height="35" fill="#5f5f5f"/><rect x="70.5" y="0" width="1" height="35" fill="#5f5f5f"/><rect x="80.5" y="0" width="1" height="35" fill="#5f5f5f"/><rect x="393.5" y="0" width="1" height="35" fill="#5f5f5f"/><path d="M6 17.5 Q16.5 5 27 17.5 Q16.5 30 6 17.5Z" fill="#cfcfcf"/><circle cx="16.5" cy="17.5" r="4.6" fill="#535353"/><circle cx="16.5" cy="17.5" r="2.9" fill="#cfcfcf"/><path d="M16.5 17.5 L16.5 14.6 A2.9 2.9 0 0 1 19.4 17.5Z" fill="#535353"/><rect x="73.5" y="2.5" width="5" height="30.5" fill="#c0c0c0"/><path d="M93 12 L98.5 17.5 L93 23" stroke="#e8e8e8" stroke-width="1.7" fill="none"/><rect x="123.5" y="3" width="29.5" height="29.5" fill="#fff" stroke="#000" stroke-width="2"/><g transform="translate(124.5 4)"><path d="M13.5 1 C17 1 17 5 16 6 C19 8 19 11 18 12 C22 15 22 23 13.5 26 C5 23 5 15 9 12 C8 11 8 8 11 6 C10 5 10 1 13.5 1Z" fill="#d3c30b"/></g><circle cx="411.8" cy="17.5" r="6.2" stroke="#d8d8d8" stroke-width="1.7" fill="none"/></svg><div class="t" style="left:161.5px;top:8px;font-size:19px;color:#e8e8e8;transform:scaleX(0.98);transform-origin:0 0">arbre 2</div></div><div class="a" style="left:0;top:629.8px;width:454px;height:35.5px;background:#535353;border-bottom:1px solid #5f5f5f"><svg class="a" style="left:0;top:0" width="454" height="36"><rect x="34.5" y="0" width="1" height="35" fill="#5f5f5f"/><rect x="70.5" y="0" width="1" height="35" fill="#5f5f5f"/><rect x="80.5" y="0" width="1" height="35" fill="#5f5f5f"/><rect x="393.5" y="0" width="1" height="35" fill="#5f5f5f"/><path d="M6 17.5 Q16.5 5 27 17.5 Q16.5 30 6 17.5Z" fill="#cfcfcf"/><circle cx="16.5" cy="17.5" r="4.6" fill="#535353"/><circle cx="16.5" cy="17.5" r="2.9" fill="#cfcfcf"/><path d="M16.5 17.5 L16.5 14.6 A2.9 2.9 0 0 1 19.4 17.5Z" fill="#535353"/><rect x="73.5" y="2.5" width="5" height="30.5" fill="#6a1a1a"/><path d="M93 12 L98.5 17.5 L93 23" stroke="#e8e8e8" stroke-width="1.7" fill="none"/><rect x="123.5" y="3" width="29.5" height="29.5" fill="#fff" stroke="#000" stroke-width="2"/><g transform="translate(124.5 4)"><path d="M13.5 1 C17 1 17 5 16 6 C19 8 19 11 18 12 C22 15 22 23 13.5 26 C5 23 5 15 9 12 C8 11 8 8 11 6 C10 5 10 1 13.5 1Z" fill="#d3c30b"/></g><circle cx="411.8" cy="17.5" r="6.2" stroke="#d8d8d8" stroke-width="1.7" fill="none"/></svg><div class="t" style="left:161.5px;top:8px;font-size:19px;color:#e8e8e8;transform:scaleX(0.98);transform-origin:0 0">arbre 1</div></div><div class="a" style="left:0;top:665.4px;width:454px;height:35.5px;background:#535353;border-bottom:1px solid #5f5f5f"><svg class="a" style="left:0;top:0" width="454" height="36"><rect x="34.5" y="0" width="1" height="35" fill="#5f5f5f"/><rect x="70.5" y="0" width="1" height="35" fill="#5f5f5f"/><rect x="80.5" y="0" width="1" height="35" fill="#5f5f5f"/><rect x="393.5" y="0" width="1" height="35" fill="#5f5f5f"/><path d="M6 17.5 Q16.5 5 27 17.5 Q16.5 30 6 17.5Z" fill="#cfcfcf"/><circle cx="16.5" cy="17.5" r="4.6" fill="#535353"/><circle cx="16.5" cy="17.5" r="2.9" fill="#cfcfcf"/><path d="M16.5 17.5 L16.5 14.6 A2.9 2.9 0 0 1 19.4 17.5Z" fill="#535353"/><rect x="73.5" y="2.5" width="5" height="30.5" fill="#a0c818"/><path d="M93 12 L98.5 17.5 L93 23" stroke="#e8e8e8" stroke-width="1.7" fill="none"/><rect x="123.5" y="3" width="29.5" height="29.5" fill="#fff" stroke="#000" stroke-width="2"/><g transform="translate(124.5 4)"><path d="M1 12 Q15 9 27 14 L1 15Z" fill="#94b00e"/></g><circle cx="411.8" cy="17.5" r="6.2" stroke="#d8d8d8" stroke-width="1.7" fill="none"/></svg><div class="t" style="left:161.5px;top:8px;font-size:19px;color:#e8e8e8;transform:scaleX(0.98);transform-origin:0 0">coline 1</div></div><div class="a" style="left:0;top:700.9px;width:454px;height:35.5px;background:#535353;border-bottom:1px solid #5f5f5f"><svg class="a" style="left:0;top:0" width="454" height="36"><rect x="34.5" y="0" width="1" height="35" fill="#5f5f5f"/><rect x="70.5" y="0" width="1" height="35" fill="#5f5f5f"/><rect x="80.5" y="0" width="1" height="35" fill="#5f5f5f"/><rect x="393.5" y="0" width="1" height="35" fill="#5f5f5f"/><path d="M6 17.5 Q16.5 5 27 17.5 Q16.5 30 6 17.5Z" fill="#cfcfcf"/><circle cx="16.5" cy="17.5" r="4.6" fill="#535353"/><circle cx="16.5" cy="17.5" r="2.9" fill="#cfcfcf"/><path d="M16.5 17.5 L16.5 14.6 A2.9 2.9 0 0 1 19.4 17.5Z" fill="#535353"/><rect x="73.5" y="2.5" width="5" height="30.5" fill="#a86a10"/><rect x="123.5" y="3" width="29.5" height="29.5" fill="#fff" stroke="#000" stroke-width="2"/><g transform="translate(124.5 4)"></g><circle cx="411.8" cy="17.5" r="6.2" stroke="#d8d8d8" stroke-width="1.7" fill="none"/></svg><div class="t" style="left:161.5px;top:8px;font-size:19px;color:#e8e8e8;transform:scaleX(0.98);transform-origin:0 0">Calque 48</div></div><div class="a" style="left:0;top:736.5px;width:454px;height:35.5px;background:#535353;border-bottom:1px solid #5f5f5f"><svg class="a" style="left:0;top:0" width="454" height="36"><rect x="34.5" y="0" width="1" height="35" fill="#5f5f5f"/><rect x="70.5" y="0" width="1" height="35" fill="#5f5f5f"/><rect x="80.5" y="0" width="1" height="35" fill="#5f5f5f"/><rect x="393.5" y="0" width="1" height="35" fill="#5f5f5f"/><path d="M6 17.5 Q16.5 5 27 17.5 Q16.5 30 6 17.5Z" fill="#cfcfcf"/><circle cx="16.5" cy="17.5" r="4.6" fill="#535353"/><circle cx="16.5" cy="17.5" r="2.9" fill="#cfcfcf"/><path d="M16.5 17.5 L16.5 14.6 A2.9 2.9 0 0 1 19.4 17.5Z" fill="#535353"/><rect x="73.5" y="2.5" width="5" height="30.5" fill="#a0c818"/><rect x="123.5" y="3" width="29.5" height="29.5" fill="#fff" stroke="#000" stroke-width="2"/><g transform="translate(124.5 4)"></g><circle cx="411.8" cy="17.5" r="6.2" stroke="#d8d8d8" stroke-width="1.7" fill="none"/></svg><div class="t" style="left:161.5px;top:8px;font-size:19px;color:#e8e8e8;transform:scaleX(0.98);transform-origin:0 0">Calque 47</div></div><div class="a" style="left:0;top:772px;width:454px;height:35.5px;background:#535353;border-bottom:1px solid #5f5f5f"><svg class="a" style="left:0;top:0" width="454" height="36"><rect x="34.5" y="0" width="1" height="35" fill="#5f5f5f"/><rect x="70.5" y="0" width="1" height="35" fill="#5f5f5f"/><rect x="80.5" y="0" width="1" height="35" fill="#5f5f5f"/><rect x="393.5" y="0" width="1" height="35" fill="#5f5f5f"/><path d="M6 17.5 Q16.5 5 27 17.5 Q16.5 30 6 17.5Z" fill="#cfcfcf"/><circle cx="16.5" cy="17.5" r="4.6" fill="#535353"/><circle cx="16.5" cy="17.5" r="2.9" fill="#cfcfcf"/><path d="M16.5 17.5 L16.5 14.6 A2.9 2.9 0 0 1 19.4 17.5Z" fill="#535353"/><rect x="73.5" y="2.5" width="5" height="30.5" fill="#b82020"/><path d="M93 12 L98.5 17.5 L93 23" stroke="#e8e8e8" stroke-width="1.7" fill="none"/><rect x="123.5" y="3" width="29.5" height="29.5" fill="#fff" stroke="#000" stroke-width="2"/><g transform="translate(124.5 4)"><rect x="0" y="10" width="27" height="4" fill="#e0c80b"/></g><circle cx="411.8" cy="17.5" r="6.2" stroke="#d8d8d8" stroke-width="1.7" fill="none"/></svg><div class="t" style="left:161.5px;top:8px;font-size:19px;color:#e8e8e8;transform:scaleX(0.98);transform-origin:0 0">herbe</div></div><div class="a" style="left:0;top:807.6px;width:454px;height:35.5px;background:#535353;border-bottom:1px solid #5f5f5f"><svg class="a" style="left:0;top:0" width="454" height="36"><rect x="34.5" y="0" width="1" height="35" fill="#5f5f5f"/><rect x="70.5" y="0" width="1" height="35" fill="#5f5f5f"/><rect x="80.5" y="0" width="1" height="35" fill="#5f5f5f"/><rect x="393.5" y="0" width="1" height="35" fill="#5f5f5f"/><path d="M6 17.5 Q16.5 5 27 17.5 Q16.5 30 6 17.5Z" fill="#cfcfcf"/><circle cx="16.5" cy="17.5" r="4.6" fill="#535353"/><circle cx="16.5" cy="17.5" r="2.9" fill="#cfcfcf"/><path d="M16.5 17.5 L16.5 14.6 A2.9 2.9 0 0 1 19.4 17.5Z" fill="#535353"/><rect x="73.5" y="2.5" width="5" height="30.5" fill="#e0a050"/><path d="M93 12 L98.5 17.5 L93 23" stroke="#e8e8e8" stroke-width="1.7" fill="none"/><rect x="123.5" y="3" width="29.5" height="29.5" fill="#fff" stroke="#000" stroke-width="2"/><g transform="translate(124.5 4)"><path d="M1 18 Q1 8 7 9 Q11 4 16 8 Q21 5 24 10 Q27 13 27 18Z" fill="#3a8e42"/></g><circle cx="411.8" cy="17.5" r="6.2" stroke="#d8d8d8" stroke-width="1.7" fill="none"/></svg><div class="t" style="left:161.5px;top:8px;font-size:19px;color:#e8e8e8;transform:scaleX(0.98);transform-origin:0 0">buisson 1</div></div><div class="a" style="left:0;top:843.2px;width:454px;height:35.5px;background:#535353;border-bottom:1px solid #5f5f5f"><svg class="a" style="left:0;top:0" width="454" height="36"><rect x="34.5" y="0" width="1" height="35" fill="#5f5f5f"/><rect x="70.5" y="0" width="1" height="35" fill="#5f5f5f"/><rect x="80.5" y="0" width="1" height="35" fill="#5f5f5f"/><rect x="393.5" y="0" width="1" height="35" fill="#5f5f5f"/><path d="M6 17.5 Q16.5 5 27 17.5 Q16.5 30 6 17.5Z" fill="#cfcfcf"/><circle cx="16.5" cy="17.5" r="4.6" fill="#535353"/><circle cx="16.5" cy="17.5" r="2.9" fill="#cfcfcf"/><path d="M16.5 17.5 L16.5 14.6 A2.9 2.9 0 0 1 19.4 17.5Z" fill="#535353"/><rect x="73.5" y="2.5" width="5" height="30.5" fill="#6a6010"/><path d="M93 12 L98.5 17.5 L93 23" stroke="#e8e8e8" stroke-width="1.7" fill="none"/><rect x="123.5" y="3" width="29.5" height="29.5" fill="#fff" stroke="#000" stroke-width="2"/><g transform="translate(124.5 4)"><path d="M0 14 Q5 9 9 11 Q14 7 19 10 Q23 11 27 12 L27 15 L0 15Z" fill="#a9c66c"/></g><circle cx="411.8" cy="17.5" r="6.2" stroke="#d8d8d8" stroke-width="1.7" fill="none"/></svg><div class="t" style="left:161.5px;top:8px;font-size:19px;color:#e8e8e8;transform:scaleX(0.98);transform-origin:0 0">montagne 7</div></div><div class="a" style="left:0;top:878.7px;width:454px;height:35.5px;background:#535353;border-bottom:1px solid #5f5f5f"><svg class="a" style="left:0;top:0" width="454" height="36"><rect x="34.5" y="0" width="1" height="35" fill="#5f5f5f"/><rect x="70.5" y="0" width="1" height="35" fill="#5f5f5f"/><rect x="80.5" y="0" width="1" height="35" fill="#5f5f5f"/><rect x="393.5" y="0" width="1" height="35" fill="#5f5f5f"/><path d="M6 17.5 Q16.5 5 27 17.5 Q16.5 30 6 17.5Z" fill="#cfcfcf"/><circle cx="16.5" cy="17.5" r="4.6" fill="#535353"/><circle cx="16.5" cy="17.5" r="2.9" fill="#cfcfcf"/><path d="M16.5 17.5 L16.5 14.6 A2.9 2.9 0 0 1 19.4 17.5Z" fill="#535353"/><rect x="73.5" y="2.5" width="5" height="30.5" fill="#a01818"/><path d="M93 12 L98.5 17.5 L93 23" stroke="#e8e8e8" stroke-width="1.7" fill="none"/><rect x="123.5" y="3" width="29.5" height="29.5" fill="#fff" stroke="#000" stroke-width="2"/><g transform="translate(124.5 4)"><path d="M2 15 Q7 11 12 13 Q18 15 21 10 Q25 8 27 10 L27 16 L2 16Z" fill="#a9c66c"/></g><circle cx="411.8" cy="17.5" r="6.2" stroke="#d8d8d8" stroke-width="1.7" fill="none"/></svg><div class="t" style="left:161.5px;top:8px;font-size:19px;color:#e8e8e8;transform:scaleX(0.98);transform-origin:0 0">montagne 6</div></div><div class="a" style="left:0;top:914.2px;width:454px;height:35.5px;background:#535353;border-bottom:1px solid #5f5f5f"><svg class="a" style="left:0;top:0" width="454" height="36"><rect x="34.5" y="0" width="1" height="35" fill="#5f5f5f"/><rect x="70.5" y="0" width="1" height="35" fill="#5f5f5f"/><rect x="80.5" y="0" width="1" height="35" fill="#5f5f5f"/><rect x="393.5" y="0" width="1" height="35" fill="#5f5f5f"/><path d="M6 17.5 Q16.5 5 27 17.5 Q16.5 30 6 17.5Z" fill="#cfcfcf"/><circle cx="16.5" cy="17.5" r="4.6" fill="#535353"/><circle cx="16.5" cy="17.5" r="2.9" fill="#cfcfcf"/><path d="M16.5 17.5 L16.5 14.6 A2.9 2.9 0 0 1 19.4 17.5Z" fill="#535353"/><rect x="73.5" y="2.5" width="5" height="30.5" fill="#8ab4e0"/><path d="M93 12 L98.5 17.5 L93 23" stroke="#e8e8e8" stroke-width="1.7" fill="none"/><rect x="123.5" y="3" width="29.5" height="29.5" fill="#fff" stroke="#000" stroke-width="2"/><g transform="translate(124.5 4)"><path d="M4 13 L24 13" stroke="#bfe4f4" stroke-width="1" fill="none"/></g><circle cx="411.8" cy="17.5" r="6.2" stroke="#d8d8d8" stroke-width="1.7" fill="none"/></svg><div class="t" style="left:161.5px;top:8px;font-size:19px;color:#e8e8e8;transform:scaleX(0.98);transform-origin:0 0">reflet</div></div><div class="a" style="left:0;top:949.8px;width:454px;height:35.5px;background:#535353;border-bottom:1px solid #5f5f5f"><svg class="a" style="left:0;top:0" width="454" height="36"><rect x="34.5" y="0" width="1" height="35" fill="#5f5f5f"/><rect x="70.5" y="0" width="1" height="35" fill="#5f5f5f"/><rect x="80.5" y="0" width="1" height="35" fill="#5f5f5f"/><rect x="393.5" y="0" width="1" height="35" fill="#5f5f5f"/><path d="M6 17.5 Q16.5 5 27 17.5 Q16.5 30 6 17.5Z" fill="#cfcfcf"/><circle cx="16.5" cy="17.5" r="4.6" fill="#535353"/><circle cx="16.5" cy="17.5" r="2.9" fill="#cfcfcf"/><path d="M16.5 17.5 L16.5 14.6 A2.9 2.9 0 0 1 19.4 17.5Z" fill="#535353"/><rect x="73.5" y="2.5" width="5" height="30.5" fill="#d8aca0"/><path d="M93 12 L98.5 17.5 L93 23" stroke="#e8e8e8" stroke-width="1.7" fill="none"/><rect x="123.5" y="3" width="29.5" height="29.5" fill="#fff" stroke="#000" stroke-width="2"/><g transform="translate(124.5 4)"><rect x="0" y="10" width="27" height="4" fill="#08b0f0"/></g><circle cx="411.8" cy="17.5" r="6.2" stroke="#d8d8d8" stroke-width="1.7" fill="none"/></svg><div class="t" style="left:161.5px;top:8px;font-size:19px;color:#e8e8e8;transform:scaleX(0.98);transform-origin:0 0">EAU</div></div><div class="a" style="left:0;top:985.3px;width:454px;height:35.5px;background:#535353;border-bottom:1px solid #5f5f5f"><svg class="a" style="left:0;top:0" width="454" height="36"><rect x="34.5" y="0" width="1" height="35" fill="#5f5f5f"/><rect x="70.5" y="0" width="1" height="35" fill="#5f5f5f"/><rect x="80.5" y="0" width="1" height="35" fill="#5f5f5f"/><rect x="393.5" y="0" width="1" height="35" fill="#5f5f5f"/><path d="M6 17.5 Q16.5 5 27 17.5 Q16.5 30 6 17.5Z" fill="#cfcfcf"/><circle cx="16.5" cy="17.5" r="4.6" fill="#535353"/><circle cx="16.5" cy="17.5" r="2.9" fill="#cfcfcf"/><path d="M16.5 17.5 L16.5 14.6 A2.9 2.9 0 0 1 19.4 17.5Z" fill="#535353"/><rect x="73.5" y="2.5" width="5" height="30.5" fill="#222"/><path d="M93 12 L98.5 17.5 L93 23" stroke="#e8e8e8" stroke-width="1.7" fill="none"/><rect x="123.5" y="3" width="29.5" height="29.5" fill="#fff" stroke="#000" stroke-width="2"/><g transform="translate(124.5 4)"><path d="M0 14 Q5 9 9 11 Q14 7 19 10 Q23 11 27 12 L27 15 L0 15Z" fill="#5e7f32"/></g><circle cx="411.8" cy="17.5" r="6.2" stroke="#d8d8d8" stroke-width="1.7" fill="none"/></svg><div class="t" style="left:161.5px;top:8px;font-size:19px;color:#e8e8e8;transform:scaleX(0.98);transform-origin:0 0">montagne 5</div></div><div class="a" style="left:0;top:1020.9px;width:454px;height:35.5px;background:#535353;border-bottom:1px solid #5f5f5f"><svg class="a" style="left:0;top:0" width="454" height="36"><rect x="34.5" y="0" width="1" height="35" fill="#5f5f5f"/><rect x="70.5" y="0" width="1" height="35" fill="#5f5f5f"/><rect x="80.5" y="0" width="1" height="35" fill="#5f5f5f"/><rect x="393.5" y="0" width="1" height="35" fill="#5f5f5f"/><path d="M6 17.5 Q16.5 5 27 17.5 Q16.5 30 6 17.5Z" fill="#cfcfcf"/><circle cx="16.5" cy="17.5" r="4.6" fill="#535353"/><circle cx="16.5" cy="17.5" r="2.9" fill="#cfcfcf"/><path d="M16.5 17.5 L16.5 14.6 A2.9 2.9 0 0 1 19.4 17.5Z" fill="#535353"/><rect x="73.5" y="2.5" width="5" height="30.5" fill="#ff9008"/><path d="M93 12 L98.5 17.5 L93 23" stroke="#e8e8e8" stroke-width="1.7" fill="none"/><rect x="123.5" y="3" width="29.5" height="29.5" fill="#fff" stroke="#000" stroke-width="2"/><g transform="translate(124.5 4)"><path d="M0 14 Q5 9 9 11 Q14 7 19 10 Q23 11 27 12 L27 15 L0 15Z" fill="#f0a04a"/></g><circle cx="411.8" cy="17.5" r="6.2" stroke="#d8d8d8" stroke-width="1.7" fill="none"/></svg><div class="t" style="left:161.5px;top:8px;font-size:19px;color:#e8e8e8;transform:scaleX(0.98);transform-origin:0 0">montagne 4</div></div><div class="a" style="left:0;top:1056.4px;width:454px;height:35.5px;background:#535353;border-bottom:1px solid #5f5f5f"><svg class="a" style="left:0;top:0" width="454" height="36"><rect x="34.5" y="0" width="1" height="35" fill="#5f5f5f"/><rect x="70.5" y="0" width="1" height="35" fill="#5f5f5f"/><rect x="80.5" y="0" width="1" height="35" fill="#5f5f5f"/><rect x="393.5" y="0" width="1" height="35" fill="#5f5f5f"/><path d="M6 17.5 Q16.5 5 27 17.5 Q16.5 30 6 17.5Z" fill="#cfcfcf"/><circle cx="16.5" cy="17.5" r="4.6" fill="#535353"/><circle cx="16.5" cy="17.5" r="2.9" fill="#cfcfcf"/><path d="M16.5 17.5 L16.5 14.6 A2.9 2.9 0 0 1 19.4 17.5Z" fill="#535353"/><rect x="73.5" y="2.5" width="5" height="30.5" fill="#cc44f0"/><path d="M93 12 L98.5 17.5 L93 23" stroke="#e8e8e8" stroke-width="1.7" fill="none"/><rect x="123.5" y="3" width="29.5" height="29.5" fill="#fff" stroke="#000" stroke-width="2"/><g transform="translate(124.5 4)"><path d="M0 14 Q5 9 9 11 Q14 7 19 10 Q23 11 27 12 L27 15 L0 15Z" fill="#018a82"/></g><circle cx="411.8" cy="17.5" r="6.2" stroke="#d8d8d8" stroke-width="1.7" fill="none"/></svg><div class="t" style="left:161.5px;top:8px;font-size:19px;color:#e8e8e8;transform:scaleX(0.98);transform-origin:0 0">montagne 3</div></div><div class="a" style="left:0;top:1092px;width:454px;height:35.5px;background:#535353;border-bottom:1px solid #5f5f5f"><svg class="a" style="left:0;top:0" width="454" height="36"><rect x="34.5" y="0" width="1" height="35" fill="#5f5f5f"/><rect x="70.5" y="0" width="1" height="35" fill="#5f5f5f"/><rect x="80.5" y="0" width="1" height="35" fill="#5f5f5f"/><rect x="393.5" y="0" width="1" height="35" fill="#5f5f5f"/><path d="M6 17.5 Q16.5 5 27 17.5 Q16.5 30 6 17.5Z" fill="#cfcfcf"/><circle cx="16.5" cy="17.5" r="4.6" fill="#535353"/><circle cx="16.5" cy="17.5" r="2.9" fill="#cfcfcf"/><path d="M16.5 17.5 L16.5 14.6 A2.9 2.9 0 0 1 19.4 17.5Z" fill="#535353"/><rect x="73.5" y="2.5" width="5" height="30.5" fill="#a01c1c"/><path d="M93 12 L98.5 17.5 L93 23" stroke="#e8e8e8" stroke-width="1.7" fill="none"/><rect x="123.5" y="3" width="29.5" height="29.5" fill="#fff" stroke="#000" stroke-width="2"/><g transform="translate(124.5 4)"><path d="M0 14 Q5 9 9 11 Q14 7 19 10 Q23 11 27 12 L27 15 L0 15Z" fill="#0093bc"/></g><circle cx="411.8" cy="17.5" r="6.2" stroke="#d8d8d8" stroke-width="1.7" fill="none"/></svg><div class="t" style="left:161.5px;top:8px;font-size:19px;color:#e8e8e8;transform:scaleX(0.98);transform-origin:0 0">montagne 2</div></div><div class="a" style="left:0;top:1127.5px;width:454px;height:35.5px;background:#4f6680;border-bottom:1px solid #5f5f5f"><svg class="a" style="left:0;top:0" width="454" height="36"><rect x="34.5" y="0" width="1" height="35" fill="#5f5f5f"/><rect x="70.5" y="0" width="1" height="35" fill="#5f5f5f"/><rect x="80.5" y="0" width="1" height="35" fill="#5f5f5f"/><rect x="393.5" y="0" width="1" height="35" fill="#5f5f5f"/><path d="M6 17.5 Q16.5 5 27 17.5 Q16.5 30 6 17.5Z" fill="#cfcfcf"/><circle cx="16.5" cy="17.5" r="4.6" fill="#4f6680"/><circle cx="16.5" cy="17.5" r="2.9" fill="#cfcfcf"/><path d="M16.5 17.5 L16.5 14.6 A2.9 2.9 0 0 1 19.4 17.5Z" fill="#4f6680"/><rect x="73.5" y="2.5" width="5" height="30.5" fill="#e0a050"/><path d="M93 12 L98.5 17.5 L93 23" stroke="#e8e8e8" stroke-width="1.7" fill="none"/><rect x="123.5" y="3" width="29.5" height="29.5" fill="#fff" stroke="#000" stroke-width="2"/><g transform="translate(124.5 4)"><path d="M0 14 Q5 9 9 11 Q14 7 19 10 Q23 11 27 12 L27 15 L0 15Z" fill="#08b8f9"/></g><circle cx="411.8" cy="17.5" r="6.2" stroke="#d8d8d8" stroke-width="1.7" fill="none"/><path d="M446 1.5 L454 1.5 L454 9.5Z" fill="#d8d8d8"/></svg><div class="t" style="left:161.5px;top:8px;font-size:19px;color:#e8e8e8;transform:scaleX(0.98);transform-origin:0 0">montagne 1</div></div></div><div class="a" style="left:2528px;top:254.5px;width:19.5px;height:1160.5px;background:#484848;"></div><svg class="a" style="left:2528px;top:254.5px" width="20" height="1161"><path d="M4 14 L10 8.5 L16 14" stroke="#aaa" stroke-width="1.5" fill="none"/><rect x="1.6" y="201" width="17" height="703" rx="8.5" fill="#5e5e5e"/><path d="M4 1146 L10 1151.5 L16 1146" stroke="#aaa" stroke-width="1.5" fill="none"/></svg><div class="t" style="left:2073.5px;top:1425px;font-size:19.5px;color:#d8d8d8;font-weight:normal;transform:scaleX(0.96);transform-origin:0 0;">52 Calques</div><svg class="a" style="left:2225px;top:1418px" width="300" height="30"><path d="M9 5 L9 24 M5 9 L26 9 M5 21 L22 21 M22 5 L22 17" stroke="#c8c8c8" stroke-width="2" fill="none"/><path d="M18 17 L28 17 L28 29 L23 25 L18 29Z" fill="#c8c8c8"/><path d="M57 10 L49 10 L49 25 L66 25 L66 17" stroke="#c8c8c8" stroke-width="2" fill="none"/><path d="M57 17 L67 7 M61 6 L68 6 L68 13" stroke="#c8c8c8" stroke-width="2" fill="none"/><circle cx="98" cy="12" r="6.5" stroke="#777" stroke-width="1.8" fill="none"/><path d="M103 17 L109 23" stroke="#777" stroke-width="2.2"/><rect x="136" y="6" width="12" height="12" fill="#777" stroke="#c8c8c8" stroke-width="2"/><rect x="141" y="12" width="12" height="12" fill="none" stroke="#888" stroke-width="1.6"/><path d="M177 5 L177 13 L184 13 M181 10 L184 13 L181 16" stroke="#c8c8c8" stroke-width="2" fill="none"/><rect x="187" y="6" width="14" height="17" fill="none" stroke="#c8c8c8" stroke-width="2"/><path d="M194 10 L194 20 M189 15 L199 15" stroke="#c8c8c8" stroke-width="2"/><rect x="226" y="6" width="17" height="17" fill="none" stroke="#c8c8c8" stroke-width="2"/><path d="M234.5 10 L234.5 19 M230 14.5 L239 14.5" stroke="#c8c8c8" stroke-width="2"/><path d="M268 8 L286 8 M272 8 L272 6 Q272 4 274 4 L280 4 Q282 4 282 6 L282 8 M270 9 L271 25 L283 25 L284 9 M274 12 L274 22 M277 12 L277 22 M280 12 L280 22" stroke="#c8c8c8" stroke-width="2" fill="none"/></svg>
<div class="a" style="left:0;top:1448px;width:2560px;height:1px;background:#6a6a6a"></div>
<div class="a" style="left:0;top:1449px;width:2560px;height:6px;background:#0e0e0e"></div>
</div>
<div class="a" style="left:6px;top:0;width:2548px;height:1px;background:#2a6e68"></div><div class="a" style="left:6px;top:1px;width:2548px;height:1px;background:#262626"></div>
</body></html>
